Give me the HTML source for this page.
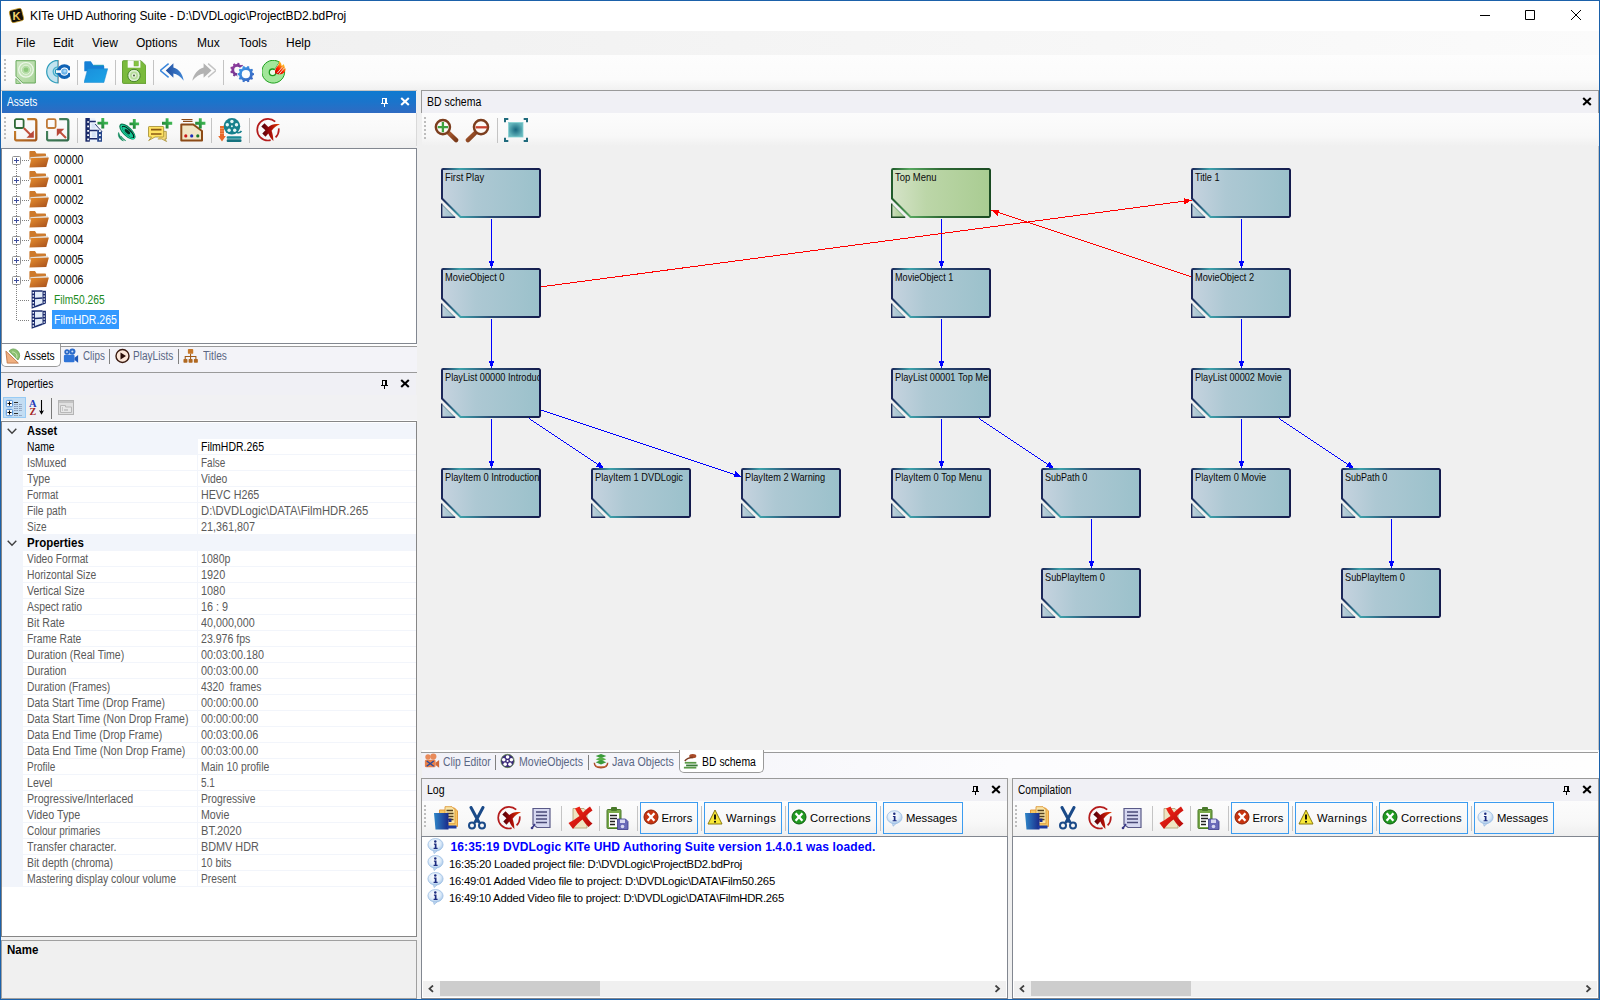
<!DOCTYPE html>
<html><head><meta charset="utf-8"><title>KITe UHD Authoring Suite</title>
<style>
*{box-sizing:border-box;margin:0;padding:0}
html,body{width:1600px;height:1000px;overflow:hidden;background:#f0f0f0}
body{font-family:"Liberation Sans",sans-serif;font-size:11px;color:#000;position:relative}
div,span,svg{position:absolute}
#titlebar{left:1px;top:1px;width:1598px;height:30px;background:#fff}
#titletext{left:29px;top:8px;font-size:12px;line-height:14px;white-space:nowrap;letter-spacing:-0.07px}
#menubar{left:1px;top:31px;width:1598px;height:24px;background:linear-gradient(90deg,#f0f0f0,#f0f0f0 15%,#fbfbfb)}
#menubar span{top:5px;font-size:12px;line-height:14px}
#maintb{left:1px;top:55px;width:1598px;height:35px;background:linear-gradient(#fdfdfd,#fbfbfb 70%,#f1f1f1)}
.grip{width:2px;background:repeating-linear-gradient(#bdbdbd 0 2px,transparent 2px 4px)}
.sep{width:1px;background:#c4c4c4}
.pt{height:22px;background:#f0f0f5;font-size:11px;line-height:22px;padding-left:5px;white-space:nowrap;letter-spacing:-0.15px}
.pt.act{background:linear-gradient(#0f7ad0,#1b74cb 50%,#2f6bc2);color:#fff}
.tb{background:linear-gradient(#fcfcfc,#f8f8f8 60%,#efefef)}
.wh{background:#fff;border:1px solid #828790}
.fr{border:1px solid #a0a0a0}
.t{white-space:nowrap;line-height:13px;font-size:12.3px;transform-origin:0 0}
.g{color:#5a5a5a}
</style></head><body>
<div style="left:0;top:0;width:1600px;height:1px;background:#1b61aa"></div>
<div style="left:0;top:0;width:1px;height:1000px;background:#1b61aa"></div>
<div style="left:1599px;top:0;width:1px;height:1000px;background:#1b61aa"></div>
<div style="left:0;top:999px;width:1600px;height:1px;background:#1b61aa"></div>
<div id="titlebar"><div id="titletext">KITe UHD Authoring Suite - D:\DVDLogic\ProjectBD2.bdProj</div></div>
<div id="menubar"><span style="left:15px">File</span><span style="left:52px">Edit</span><span style="left:91px">View</span><span style="left:135px">Options</span><span style="left:196px">Mux</span><span style="left:238px">Tools</span><span style="left:285px">Help</span></div>
<div id="maintb"></div>
<div class="grip" style="left:4px;top:59px;height:22px"></div>
<div class="sep" style="left:77px;top:60px;height:25px"></div>
<div class="sep" style="left:115px;top:60px;height:25px"></div>
<div class="sep" style="left:153px;top:60px;height:25px"></div>
<div class="sep" style="left:223px;top:60px;height:25px"></div>
<svg style="left:14px;top:60px" width="24" height="24" viewBox="0 0 24 24"><defs><linearGradient id="m0" x1="0" y1="0" x2="1" y2="1"><stop offset="0" stop-color="#cfe8c4"/><stop offset="1" stop-color="#a8d498"/></linearGradient></defs><path d="M2 0.700h19.300v22.300h-12.500l-6.800 -6.800z" fill="url(#m0)" stroke="#66a85a" stroke-width="1"/><circle cx="12" cy="9.800" r="7.300" fill="#c4e4b8" stroke="#eef8ea" stroke-width="1.200"/><circle cx="12" cy="9.800" r="4.600" fill="#b4dca6" stroke="#e4f4dc" stroke-width="1"/><circle cx="12" cy="9.800" r="2.300" fill="#8cc87a"/><path d="M1.900 18.500l5 5h-5z" fill="#b4dca6" stroke="#66a85a" stroke-width="0.800"/></svg>
<svg style="left:46px;top:60px" width="24" height="24" viewBox="0 0 24 24"><path d="M12 0.300a11.300 11.300 0 0 0 0 22.600z" fill="#c2e3ef" stroke="#2d9cba" stroke-width="1.200"/><path d="M12 6.800a4.800 4.800 0 0 0 0 9.600" fill="none" stroke="#49afc9" stroke-width="1.300"/><path d="M12 9a2.600 2.600 0 0 0 0 5.200" fill="none" stroke="#1f93b5" stroke-width="1.200"/><path d="M12.500 0.300v22.600" stroke="#9a9a9a" stroke-width="0.800"/><circle cx="18.400" cy="11.600" r="5.700" fill="none" stroke="#0f62b4" stroke-width="3.400"/><path d="M10 11.600h17" stroke="#fbfbfb" stroke-width="2.600"/><circle cx="18.400" cy="11.600" r="3.900" fill="#fff"/><circle cx="18.400" cy="11.600" r="3.200" fill="#6eb4ea"/><circle cx="18.800" cy="11.200" r="1.400" fill="#a8d6f6"/></svg>
<svg style="left:84px;top:60px" width="24" height="24" viewBox="0 0 24 24"><defs><linearGradient id="m2" x1="0" y1="0" x2="1" y2="1"><stop offset="0" stop-color="#1a8fdc"/><stop offset="1" stop-color="#1ca4e6"/></linearGradient></defs><path d="M0.300 2.200a1 1 0 0 1 1 -1h5.500l2.700 4.100h9.700a1 1 0 0 1 1 1v5h-19.900z" fill="#1580d6"/><path d="M9.500 5.300h10.200" stroke="#1a9ab8" stroke-width="1"/><path d="M3.700 8.700h20l-3.800 13.800h-19.900z" fill="url(#m2)" stroke="#1888d0" stroke-width="0.500"/></svg>
<svg style="left:122px;top:60px" width="24" height="24" viewBox="0 0 24 24"><path d="M1.300 0.700h17.700l5 5v17.700h-22.700a0.800 0.800 0 0 1 -0.800 -0.800v-21.100a0.800 0.800 0 0 1 0.800 -0.800z" fill="#7aba3c" stroke="#5c9a2a" stroke-width="0.900"/><rect x="5.700" y="0.300" width="12.700" height="7.400" fill="#fbfbfb"/><rect x="12" y="1.200" width="4.300" height="4.800" fill="#86c440" stroke="#6aa832" stroke-width="0.500"/><circle cx="12" cy="15.500" r="6.200" fill="#dcefd0" stroke="#3c7a20" stroke-width="0.900"/><circle cx="12" cy="15.500" r="4" fill="#b6dc9c"/><circle cx="12" cy="15.500" r="2.200" fill="#e8f4e0"/><circle cx="12" cy="15.500" r="0.900" fill="#3a4a30"/></svg>
<svg style="left:160px;top:60px" width="24" height="24" viewBox="0 0 24 24"><defs><linearGradient id="m4" x1="0" y1="0" x2="1" y2="0"><stop offset="0" stop-color="#234f9e"/><stop offset="1" stop-color="#3f86d6"/></linearGradient></defs><path d="M8.600 3.600l-8.300 6.900l8.300 6.800" fill="none" stroke="#3a86dc" stroke-width="1.500"/><path d="M13.400 3.200l-7.600 7.300l7.600 7.200v-4.200c3.600 0.600 7.400 3.200 10.300 7.300c-0.800 -6.400 -4.600 -12 -10.300 -13.400z" fill="url(#m4)"/></svg>
<svg style="left:192px;top:60px" width="24" height="24" viewBox="0 0 24 24"><path d="M16.100 3.600l7.900 6.900l-7.900 6.800" fill="none" stroke="#c4c4c4" stroke-width="1.500"/><path d="M11.600 3.200l7.900 7.300l-7.900 7.200v-4.200c-3.600 0.600 -7.900 3.200 -11.300 7.300c1.200 -6.400 5.600 -12 11.300 -13.400z" fill="#b2b2b2"/></svg>
<svg style="left:230px;top:60px" width="24" height="24" viewBox="0 0 24 24"><defs><linearGradient id="m6a" x1="0" y1="0" x2="1" y2="1"><stop offset="0" stop-color="#9a3aa0"/><stop offset="1" stop-color="#5c3a8c"/></linearGradient><linearGradient id="m6b" x1="0" y1="0" x2="1" y2="1"><stop offset="0" stop-color="#3aa0f0"/><stop offset="1" stop-color="#3a5cb8"/></linearGradient></defs><path d="M13.07 8.67L14.45 9.05L14.45 10.75L13.07 11.13L12.51 12.67L13.32 13.84L12.23 15.15L10.93 14.55L9.51 15.37L9.38 16.79L7.70 17.09L7.09 15.80L5.48 15.51L4.46 16.52L2.99 15.67L3.35 14.28L2.30 13.03L0.87 13.15L0.29 11.54L1.46 10.72L1.46 9.08L0.29 8.26L0.87 6.65L2.30 6.77L3.35 5.52L2.99 4.13L4.46 3.28L5.48 4.29L7.09 4.00L7.70 2.71L9.38 3.01L9.51 4.43L10.93 5.25L12.23 4.65L13.32 5.96L12.51 7.13Z" fill="url(#m6a)"/><circle cx="7.300" cy="9.900" r="3.100" fill="#fbfbfb"/><circle cx="15.900" cy="14.200" r="8.900" fill="#fbfbfb"/><path d="M22.68 12.91L24.15 13.32L24.15 15.08L22.68 15.49L22.14 17.14L23.10 18.33L22.06 19.77L20.62 19.23L19.22 20.25L19.29 21.78L17.61 22.32L16.76 21.05L15.04 21.05L14.19 22.32L12.51 21.78L12.58 20.25L11.18 19.23L9.74 19.77L8.70 18.33L9.66 17.14L9.12 15.49L7.65 15.08L7.65 13.32L9.12 12.91L9.66 11.26L8.70 10.07L9.74 8.63L11.18 9.17L12.58 8.15L12.51 6.62L14.19 6.08L15.04 7.35L16.76 7.35L17.61 6.08L19.29 6.62L19.22 8.15L20.62 9.17L22.06 8.63L23.10 10.07L22.14 11.26Z" fill="url(#m6b)"/><circle cx="15.900" cy="14.200" r="4.100" fill="#fdfdfd"/></svg>
<svg style="left:262px;top:60px" width="24" height="24" viewBox="0 0 24 24"><defs><linearGradient id="m7" x1="0" y1="1" x2="0.600" y2="0"><stop offset="0" stop-color="#c00000"/><stop offset="0.450" stop-color="#ff2000"/><stop offset="0.750" stop-color="#ff9a10"/><stop offset="1" stop-color="#ffe040"/></linearGradient></defs><path d="M11.400 12.100l6 -10a11.400 11.400 0 1 0 5.200 8.500z" fill="#a2e69a" stroke="#1ea01e" stroke-width="1"/><circle cx="10.600" cy="12.300" r="3.300" fill="#eafbe6" stroke="#1e9a1e" stroke-width="1.300"/><path d="M11.400 12.100l6.200 -10.200l5 8.700z" fill="#fbfbfb"/><path d="M13.300 13.200c-1 -3 1 -6 3 -8c0.500 -1.500 0.800 -3 0.700 -4.500c1.800 1.500 2.800 3.500 2.600 5.200c1 -0.300 1.600 -1 2 -1.800c0.900 1.600 1.400 3.300 1 4.600c0.500 0 0.800 -0.300 1 -0.600c0.400 2.400 -0.900 4.600 -3.200 5.600c-2.600 1.100 -5.600 0.500 -7.100 -0.500z" fill="url(#m7)"/><path d="M15.200 13.200l5.600 -6.600M17.300 13.900l5 -5.900" stroke="#e4e4e4" stroke-width="0.900"/></svg>
<svg style="left:1478px;top:8px" width="110" height="16" viewBox="0 0 110 16"><path d="M2 7.5h10M47.5 2.500h9v9h-9zM93 2l10 10M103 2l-10 10" stroke="#000" stroke-width="1" fill="none"/></svg>
<svg style="left:7px;top:7px" width="18" height="18" viewBox="0 0 18 18"><defs><linearGradient id="kg" x1="0" y1="0" x2="1" y2="1"><stop offset="0" stop-color="#fff0a0"/><stop offset="1" stop-color="#e8a818"/></linearGradient></defs><g transform="rotate(-14 9.500 8.500)"><rect x="3.200" y="2.200" width="12.600" height="12.600" rx="2.200" fill="#14100a" stroke="#c89a20" stroke-width="0.700"/></g><text x="5.600" y="13" font-family="Liberation Sans, sans-serif" font-weight="bold" font-size="11" fill="url(#kg)">K</text></svg>
<div style="left:1px;top:90px;width:416px;height:1px;background:#c6c6c6"></div>
<div class="pt act" style="left:2px;top:91px;width:414px"></div>
<span class="t" style="left:7px;top:96px;transform:scaleX(0.8209);color:#fff">Assets</span>
<svg style="left:381px;top:98px" width="8" height="10" viewBox="0 0 8 10" shape-rendering="crispEdges" fill="#fff"><rect x="1" y="0" width="5" height="1"/><rect x="1" y="0" width="1" height="5"/><rect x="4" y="0" width="2" height="5"/><rect x="0" y="5" width="7" height="1"/><rect x="3" y="6" width="1" height="3"/></svg>
<svg style="left:400px;top:97px" width="10" height="9" viewBox="0 0 10 9"><path d="M1.2 1l7.6 7M8.8 1l-7.6 7" stroke="#fff" stroke-width="2.1" fill="none"/></svg>
<div class="tb" style="left:1px;top:113px;width:416px;height:35px"></div>
<div class="grip" style="left:4px;top:117px;height:22px"></div>
<div style="left:416px;top:113px;width:1px;height:33px;background:#d9d9d9"></div>
<div class="sep" style="left:77px;top:118px;height:25px"></div>
<div class="sep" style="left:211px;top:118px;height:25px"></div>
<div class="sep" style="left:249px;top:118px;height:25px"></div>
<svg style="left:14px;top:118px" width="26" height="26" viewBox="0 0 26 26"><defs><linearGradient id="a0" x1="0" y1="0" x2="1" y2="1"><stop offset="0" stop-color="#d08a30"/><stop offset="1" stop-color="#a4561c"/></linearGradient></defs><path d="M13.200 1.200h7.100a2 2 0 0 1 2 2v17.200a2 2 0 0 1 -2 2h-17.300a2 2 0 0 1 -2 -2v-7.400" fill="none" stroke="url(#a0)" stroke-width="2.300"/><rect x="0.900" y="1.100" width="8.700" height="8.900" rx="1.500" fill="none" stroke="#2f6a36" stroke-width="1.800"/><path d="M9.800 10l7 7" stroke="#c0503c" stroke-width="2"/><path d="M19.800 12.500v7.300h-7.300z" fill="#b84838"/></svg>
<svg style="left:46px;top:118px" width="26" height="26" viewBox="0 0 26 26"><defs><linearGradient id="a1" x1="0" y1="0" x2="1" y2="1"><stop offset="0" stop-color="#4a8a62"/><stop offset="1" stop-color="#336a4a"/></linearGradient></defs><path d="M13.200 1.200h7.100a2 2 0 0 1 2 2v17.200a2 2 0 0 1 -2 2h-17.300a2 2 0 0 1 -2 -2v-7.400" fill="none" stroke="url(#a1)" stroke-width="2.300"/><rect x="0.900" y="1.100" width="8.700" height="8.900" rx="1.500" fill="none" stroke="#c07a38" stroke-width="1.800"/><path d="M13.500 13.500l6.500 6.500" stroke="#c0503c" stroke-width="2"/><path d="M10.800 18.300v-7.500h7.500z" fill="#b84838"/></svg>
<svg style="left:84px;top:118px" width="26" height="26" viewBox="0 0 26 26"><path d="M5 0.300h6.300v5.700l6.700 7.600v10h-13z" fill="#edf3fc"/><rect x="7.500" y="5.500" width="4" height="5" fill="#d5e3f6"/><rect x="7.800" y="14.300" width="4" height="5" fill="#d5e3f6"/><rect x="1.400" y="0" width="4.400" height="23.700" fill="#1a2968"/><path d="M13.200 11.800h1.300l3.500 1.800v10.100h-4.800z" fill="#27468a"/><path d="M11.200 6l2.500 3l4.300 4.600" stroke="#1a2968" stroke-width="0.900" fill="none"/><path d="M5.800 3.400h6M5.800 12.400h7.400M5.800 20.800h7.400" stroke="#1a2968" stroke-width="1.500"/><path d="M3.200 4h1.800M3.200 8.400h1.800M3.200 12.800h1.800M3.200 17.200h1.800M3.200 21.400h1.800M15 13.200h1.800M15 17.200h1.800M15 21.400h1.800" stroke="#fbfdff" stroke-width="1.700"/><defs><linearGradient id="pg" x1="0" y1="1" x2="1" y2="0"><stop offset="0" stop-color="#176a2c"/><stop offset="0.500" stop-color="#2fa246"/><stop offset="1" stop-color="#52cc62"/></linearGradient></defs><path d="M17.35 -0.20h2.9v3.85h3.85v2.9h-3.85v3.85h-2.9v-3.85h-3.85v-2.9h3.85z" fill="url(#pg)"/></svg>
<svg style="left:116px;top:118px" width="26" height="26" viewBox="0 0 26 26"><path d="M2.600 14.500c-1 3.500 0.800 6.700 4.800 8.500c-2.300 -2.500 -3.600 -5.300 -4.800 -8.500z" fill="#0f8a5c" stroke="#0f8a5c" stroke-width="0.600"/><path d="M5 18c0.500 2.200 2.200 3.900 4.800 4.700c-2 -1.400 -3.400 -3 -4.800 -4.700z" fill="#0f8a5c" stroke="#0f8a5c" stroke-width="0.500"/><ellipse cx="11.400" cy="13.600" rx="4.700" ry="10.400" transform="rotate(-46 11.400 13.600)" fill="#0c7a54"/><ellipse cx="11.800" cy="14" rx="3.700" ry="9.600" transform="rotate(-46 11.800 14)" fill="#1adca6"/><ellipse cx="12.100" cy="13.900" rx="2.900" ry="8.400" transform="rotate(-46 12.100 13.900)" fill="#0a1a14"/><ellipse cx="11.700" cy="14.100" rx="2.300" ry="7.400" transform="rotate(-46 11.700 14.100)" fill="#16c896"/><ellipse cx="11.400" cy="13.700" rx="1.600" ry="3.400" transform="rotate(-46 11.400 13.700)" fill="#083024"/><defs><linearGradient id="pg" x1="0" y1="1" x2="1" y2="0"><stop offset="0" stop-color="#176a2c"/><stop offset="0.500" stop-color="#2fa246"/><stop offset="1" stop-color="#52cc62"/></linearGradient></defs><path d="M16.85 1.10h2.9v3.35h3.35v2.9h-3.35v3.35h-2.9v-3.35h-3.35v-2.9h3.35z" fill="url(#pg)"/></svg>
<svg style="left:148px;top:118px" width="26" height="26" viewBox="0 0 26 26"><path d="M15 13.400h3.300v7.600h-1.500l1.800 2.500l-4.800 -2.500h-4" fill="#f2d878" stroke="#a89038" stroke-width="0.800"/><path d="M1.200 8.500h13.800a0.700 0.700 0 0 1 0.700 0.700v9.100a0.700 0.700 0 0 1 -0.700 0.700h-8l-6.300 3.500l2.800 -3.500h-2.300a0.700 0.700 0 0 1 -0.700 -0.700v-9.100a0.700 0.700 0 0 1 0.700 -0.700z" fill="#ffe262" stroke="#a08a30" stroke-width="0.800"/><path d="M3 11.600h10.500M3 16h10.500" stroke="#8a5a14" stroke-width="1.700"/><defs><linearGradient id="pg" x1="0" y1="1" x2="1" y2="0"><stop offset="0" stop-color="#176a2c"/><stop offset="0.500" stop-color="#2fa246"/><stop offset="1" stop-color="#52cc62"/></linearGradient></defs><path d="M17.65 0.20h2.9v3.65h3.65v2.9h-3.65v3.65h-2.9v-3.65h-3.65v-2.9h3.65z" fill="url(#pg)"/></svg>
<svg style="left:180px;top:118px" width="26" height="26" viewBox="0 0 26 26"><path d="M1.500 1.500h11M3 3.300h9.500" stroke="#8a4a18" stroke-width="1.200"/><path d="M1.300 6.500h12l8.700 6.500v9.400h-20.700z" fill="#f1e6c6" stroke="#8c4a16" stroke-width="2" stroke-linejoin="round"/><circle cx="5.800" cy="17.900" r="1.600" fill="#cc1818"/><circle cx="11.700" cy="17.900" r="1.600" fill="#1c2cb8"/><circle cx="17.800" cy="17.900" r="1.600" fill="#1c7a2c"/><defs><linearGradient id="pg" x1="0" y1="1" x2="1" y2="0"><stop offset="0" stop-color="#176a2c"/><stop offset="0.500" stop-color="#2fa246"/><stop offset="1" stop-color="#52cc62"/></linearGradient></defs><path d="M18.85 0.20h2.9v3.65h3.65v2.9h-3.65v3.65h-2.9v-3.65h-3.65v-2.9h3.65z" fill="url(#pg)"/></svg>
<svg style="left:218px;top:118px" width="26" height="26" viewBox="0 0 26 26"><circle cx="13.900" cy="8.300" r="8.300" fill="#17808c"/><path d="M19 14.500c2 0.500 3.500 0 4.500 -1.500" fill="none" stroke="#17808c" stroke-width="1.600"/><circle cx="13.900" cy="3.500" r="1.700" fill="#e4f4f4"/><circle cx="9.300" cy="6.800" r="1.700" fill="#e4f4f4"/><circle cx="18.500" cy="6.800" r="1.700" fill="#e4f4f4"/><circle cx="11.100" cy="12.200" r="1.700" fill="#e4f4f4"/><circle cx="16.700" cy="12.200" r="1.700" fill="#e4f4f4"/><circle cx="13.900" cy="8.300" r="1" fill="#e4f4f4"/><rect x="8.700" y="18.200" width="14.800" height="2.500" rx="1" fill="#1a8a96"/><rect x="8.700" y="21.300" width="14.800" height="2.600" rx="1" fill="#15727e"/><path d="M2 8.100h4v10h1.800l-3.800 5.300l-3.800 -5.300h1.800z" fill="#e8682a"/><path d="M2 10.500h4M2 13h4M2 15.500h4" stroke="#f4a070" stroke-width="0.800"/></svg>
<svg style="left:256px;top:118px" width="26" height="26" viewBox="0 0 26 26"><defs><linearGradient id="a7" x1="0" y1="0" x2="1" y2="0"><stop offset="0" stop-color="#4a0008"/><stop offset="0.450" stop-color="#a00808"/><stop offset="1" stop-color="#e84000"/></linearGradient></defs><circle cx="12" cy="11.700" r="10.800" fill="none" stroke="#b41c1c" stroke-width="1.700" stroke-dasharray="8.500 5.650 44.300 7.500 1.900 0"/><path d="M8.500 5.300L5.300 8.500L9.400 12.200L6.300 15.500L9.500 18.700L12.300 15.500C13.500 18.200 15 20.700 17.400 23C17.300 19.200 16.600 15.700 15.600 12.700C17.600 9.700 20.200 7.700 24 6.400C19.500 5.200 15.500 6.200 12.300 8.900Z" fill="url(#a7)"/></svg>
<div class="wh" style="left:1px;top:148px;width:416px;height:196px"></div>
<div style="left:16px;top:165px;width:1px;height:156px;background:repeating-linear-gradient(#808080 0 1px,transparent 1px 2px)"></div>
<div style="left:22px;top:160px;width:7px;height:1px;background:repeating-linear-gradient(90deg,#808080 0 1px,transparent 1px 2px)"></div>
<div style="left:22px;top:180px;width:7px;height:1px;background:repeating-linear-gradient(90deg,#808080 0 1px,transparent 1px 2px)"></div>
<div style="left:22px;top:200px;width:7px;height:1px;background:repeating-linear-gradient(90deg,#808080 0 1px,transparent 1px 2px)"></div>
<div style="left:22px;top:220px;width:7px;height:1px;background:repeating-linear-gradient(90deg,#808080 0 1px,transparent 1px 2px)"></div>
<div style="left:22px;top:240px;width:7px;height:1px;background:repeating-linear-gradient(90deg,#808080 0 1px,transparent 1px 2px)"></div>
<div style="left:22px;top:260px;width:7px;height:1px;background:repeating-linear-gradient(90deg,#808080 0 1px,transparent 1px 2px)"></div>
<div style="left:22px;top:280px;width:7px;height:1px;background:repeating-linear-gradient(90deg,#808080 0 1px,transparent 1px 2px)"></div>
<div style="left:18px;top:300px;width:11px;height:1px;background:repeating-linear-gradient(90deg,#808080 0 1px,transparent 1px 2px)"></div>
<div style="left:18px;top:320px;width:11px;height:1px;background:repeating-linear-gradient(90deg,#808080 0 1px,transparent 1px 2px)"></div>
<svg style="left:12px;top:156px" width="9" height="9" viewBox="0 0 9 9"><rect x="0.5" y="0.5" width="8" height="8" rx="1" fill="#fff" stroke="#919191"/><path d="M2 4.5h5M4.500 2v5" stroke="#3a4a9a" stroke-width="1"/></svg>
<svg style="left:28px;top:150px" width="22" height="20" viewBox="0 0 22 20"><defs><linearGradient id="fg" x1="0" y1="0" x2="1" y2="1"><stop offset="0" stop-color="#e8902e"/><stop offset="1" stop-color="#a54e1c"/></linearGradient></defs><path d="M1.400 1.700a0.800 0.800 0 0 1 0.800 -0.800h4.800l1.500 2.700h8.700a0.800 0.800 0 0 1 0.800 0.800v5h-16.600z" fill="#cd7a2c"/><path d="M2.300 7.300l17.200 -1.300v2.500h-17.200z" fill="#f2f2f0" stroke="#b8b8b8" stroke-width="0.300"/><path d="M3.300 7.900l17.600 -0.500l-2.600 9.700l-16.900 0.400z" fill="url(#fg)"/></svg>
<span class="t" style="left:54px;top:154px;transform:scaleX(0.8595)">00000</span>
<svg style="left:12px;top:176px" width="9" height="9" viewBox="0 0 9 9"><rect x="0.5" y="0.5" width="8" height="8" rx="1" fill="#fff" stroke="#919191"/><path d="M2 4.5h5M4.500 2v5" stroke="#3a4a9a" stroke-width="1"/></svg>
<svg style="left:28px;top:170px" width="22" height="20" viewBox="0 0 22 20"><defs><linearGradient id="fg" x1="0" y1="0" x2="1" y2="1"><stop offset="0" stop-color="#e8902e"/><stop offset="1" stop-color="#a54e1c"/></linearGradient></defs><path d="M1.400 1.700a0.800 0.800 0 0 1 0.800 -0.800h4.800l1.500 2.700h8.700a0.800 0.800 0 0 1 0.800 0.800v5h-16.600z" fill="#cd7a2c"/><path d="M2.300 7.300l17.200 -1.300v2.500h-17.200z" fill="#f2f2f0" stroke="#b8b8b8" stroke-width="0.300"/><path d="M3.300 7.900l17.600 -0.500l-2.600 9.700l-16.900 0.400z" fill="url(#fg)"/></svg>
<span class="t" style="left:54px;top:174px;transform:scaleX(0.8595)">00001</span>
<svg style="left:12px;top:196px" width="9" height="9" viewBox="0 0 9 9"><rect x="0.5" y="0.5" width="8" height="8" rx="1" fill="#fff" stroke="#919191"/><path d="M2 4.5h5M4.500 2v5" stroke="#3a4a9a" stroke-width="1"/></svg>
<svg style="left:28px;top:190px" width="22" height="20" viewBox="0 0 22 20"><defs><linearGradient id="fg" x1="0" y1="0" x2="1" y2="1"><stop offset="0" stop-color="#e8902e"/><stop offset="1" stop-color="#a54e1c"/></linearGradient></defs><path d="M1.400 1.700a0.800 0.800 0 0 1 0.800 -0.800h4.800l1.500 2.700h8.700a0.800 0.800 0 0 1 0.800 0.800v5h-16.600z" fill="#cd7a2c"/><path d="M2.300 7.300l17.200 -1.300v2.500h-17.200z" fill="#f2f2f0" stroke="#b8b8b8" stroke-width="0.300"/><path d="M3.300 7.900l17.600 -0.500l-2.600 9.700l-16.900 0.400z" fill="url(#fg)"/></svg>
<span class="t" style="left:54px;top:194px;transform:scaleX(0.8595)">00002</span>
<svg style="left:12px;top:216px" width="9" height="9" viewBox="0 0 9 9"><rect x="0.5" y="0.5" width="8" height="8" rx="1" fill="#fff" stroke="#919191"/><path d="M2 4.5h5M4.500 2v5" stroke="#3a4a9a" stroke-width="1"/></svg>
<svg style="left:28px;top:210px" width="22" height="20" viewBox="0 0 22 20"><defs><linearGradient id="fg" x1="0" y1="0" x2="1" y2="1"><stop offset="0" stop-color="#e8902e"/><stop offset="1" stop-color="#a54e1c"/></linearGradient></defs><path d="M1.400 1.700a0.800 0.800 0 0 1 0.800 -0.800h4.800l1.500 2.700h8.700a0.800 0.800 0 0 1 0.800 0.800v5h-16.600z" fill="#cd7a2c"/><path d="M2.300 7.300l17.200 -1.300v2.500h-17.200z" fill="#f2f2f0" stroke="#b8b8b8" stroke-width="0.300"/><path d="M3.300 7.900l17.600 -0.500l-2.600 9.700l-16.900 0.400z" fill="url(#fg)"/></svg>
<span class="t" style="left:54px;top:214px;transform:scaleX(0.8595)">00003</span>
<svg style="left:12px;top:236px" width="9" height="9" viewBox="0 0 9 9"><rect x="0.5" y="0.5" width="8" height="8" rx="1" fill="#fff" stroke="#919191"/><path d="M2 4.5h5M4.500 2v5" stroke="#3a4a9a" stroke-width="1"/></svg>
<svg style="left:28px;top:230px" width="22" height="20" viewBox="0 0 22 20"><defs><linearGradient id="fg" x1="0" y1="0" x2="1" y2="1"><stop offset="0" stop-color="#e8902e"/><stop offset="1" stop-color="#a54e1c"/></linearGradient></defs><path d="M1.400 1.700a0.800 0.800 0 0 1 0.800 -0.800h4.800l1.500 2.700h8.700a0.800 0.800 0 0 1 0.800 0.800v5h-16.600z" fill="#cd7a2c"/><path d="M2.300 7.300l17.200 -1.300v2.500h-17.200z" fill="#f2f2f0" stroke="#b8b8b8" stroke-width="0.300"/><path d="M3.300 7.900l17.600 -0.500l-2.600 9.700l-16.900 0.400z" fill="url(#fg)"/></svg>
<span class="t" style="left:54px;top:234px;transform:scaleX(0.8595)">00004</span>
<svg style="left:12px;top:256px" width="9" height="9" viewBox="0 0 9 9"><rect x="0.5" y="0.5" width="8" height="8" rx="1" fill="#fff" stroke="#919191"/><path d="M2 4.5h5M4.500 2v5" stroke="#3a4a9a" stroke-width="1"/></svg>
<svg style="left:28px;top:250px" width="22" height="20" viewBox="0 0 22 20"><defs><linearGradient id="fg" x1="0" y1="0" x2="1" y2="1"><stop offset="0" stop-color="#e8902e"/><stop offset="1" stop-color="#a54e1c"/></linearGradient></defs><path d="M1.400 1.700a0.800 0.800 0 0 1 0.800 -0.800h4.800l1.500 2.700h8.700a0.800 0.800 0 0 1 0.800 0.800v5h-16.600z" fill="#cd7a2c"/><path d="M2.300 7.300l17.200 -1.300v2.500h-17.200z" fill="#f2f2f0" stroke="#b8b8b8" stroke-width="0.300"/><path d="M3.300 7.900l17.600 -0.500l-2.600 9.700l-16.900 0.400z" fill="url(#fg)"/></svg>
<span class="t" style="left:54px;top:254px;transform:scaleX(0.8595)">00005</span>
<svg style="left:12px;top:276px" width="9" height="9" viewBox="0 0 9 9"><rect x="0.5" y="0.5" width="8" height="8" rx="1" fill="#fff" stroke="#919191"/><path d="M2 4.5h5M4.500 2v5" stroke="#3a4a9a" stroke-width="1"/></svg>
<svg style="left:28px;top:270px" width="22" height="20" viewBox="0 0 22 20"><defs><linearGradient id="fg" x1="0" y1="0" x2="1" y2="1"><stop offset="0" stop-color="#e8902e"/><stop offset="1" stop-color="#a54e1c"/></linearGradient></defs><path d="M1.400 1.700a0.800 0.800 0 0 1 0.800 -0.800h4.800l1.500 2.700h8.700a0.800 0.800 0 0 1 0.800 0.800v5h-16.600z" fill="#cd7a2c"/><path d="M2.300 7.300l17.200 -1.300v2.500h-17.200z" fill="#f2f2f0" stroke="#b8b8b8" stroke-width="0.300"/><path d="M3.300 7.900l17.600 -0.500l-2.600 9.700l-16.900 0.400z" fill="url(#fg)"/></svg>
<span class="t" style="left:54px;top:274px;transform:scaleX(0.8595)">00006</span>
<svg style="left:31px;top:290px" width="16" height="20" viewBox="0 0 16 20"><path d="M2 1h12v13.500l-12 4z" fill="#e4edf9"/><path d="M0.600 0.300h3.400v17.300l-3.400 1.100z" fill="#1c2c6e"/><path d="M11.500 0.800h3.400v12.800l-3.400 1.100z" fill="#1c2c6e"/><path d="M4 0.900h7.500M4 8.600l7.500 -0.500M4 16.800l7.500 -2.800" stroke="#1c2c6e" stroke-width="1.500"/><path d="M2.300 2v1.500M2.300 5.300v1.500M2.300 8.600v1.500M2.300 11.900v1.500M2.300 15.200v1.500M13.200 2.400v1.300M13.200 5.400v1.300M13.200 8.400v1.300M13.200 11.400v1.300" stroke="#f4f8fd" stroke-width="1.500"/></svg>
<svg style="left:31px;top:310px" width="16" height="20" viewBox="0 0 16 20"><path d="M2 1h12v13.500l-12 4z" fill="#e4edf9"/><path d="M0.600 0.300h3.400v17.300l-3.400 1.100z" fill="#1c2c6e"/><path d="M11.500 0.800h3.400v12.800l-3.400 1.100z" fill="#1c2c6e"/><path d="M4 0.900h7.500M4 8.600l7.500 -0.500M4 16.800l7.500 -2.800" stroke="#1c2c6e" stroke-width="1.500"/><path d="M2.300 2v1.500M2.300 5.300v1.500M2.300 8.600v1.500M2.300 11.900v1.500M2.300 15.200v1.500M13.200 2.400v1.300M13.200 5.400v1.300M13.200 8.400v1.300M13.200 11.400v1.300" stroke="#f4f8fd" stroke-width="1.500"/></svg>
<span class="t" style="left:54px;top:294px;transform:scaleX(0.8332);color:#1e8c1e">Film50.265</span>
<div style="left:52px;top:310px;width:67px;height:19px;background:#3399ff"></div>
<span class="t" style="left:54px;top:314px;transform:scaleX(0.8508);color:#fff">FilmHDR.265</span>
<div style="left:1px;top:344px;width:416px;height:28px;background:#f3f3f8"></div>
<div style="left:1px;top:344px;width:416px;height:2px;background:#fdfdfd"></div>
<div style="left:60px;top:346px;width:357px;height:1px;background:#9a9a9a"></div>
<div style="left:1px;top:344px;width:60px;height:23px;background:#fff;border:1px solid #9a9a9a;border-top:none;border-radius:0 0 5px 5px"></div>
<svg style="left:5px;top:348px" width="16" height="16" viewBox="0 0 18 18"><path d="M9 1a7.500 7.500 0 0 1 7.500 7.500a7.500 7.500 0 0 1 -2 5l-10 -10a7.500 7.500 0 0 1 4.500 -2.500z" fill="#8cc070" stroke="#5a9a48" stroke-width="0.800"/><path d="M8 4.500a5 5 0 0 1 5 7" fill="none" stroke="#d0ecc0" stroke-width="1"/><path d="M1 3.500l14 13.500h-12.500z" fill="#f0b080" stroke="#c07848" stroke-width="1"/></svg>
<span class="t" style="left:24px;top:350px;transform:scaleX(0.8290)">Assets</span>
<svg style="left:63px;top:348px" width="16" height="16" viewBox="0 0 18 18"><circle cx="4.500" cy="4.500" r="3" fill="#2c6ac8"/><circle cx="10.500" cy="4" r="3.500" fill="#2c6ac8"/><circle cx="4.500" cy="4.500" r="1" fill="#cfe0f8"/><circle cx="10.500" cy="4" r="1.200" fill="#cfe0f8"/><rect x="1" y="7.500" width="12" height="8.500" rx="1.500" fill="#2f74d8"/><path d="M13 11l4 -3v8.500l-4 -3z" fill="#1f58b8"/></svg>
<span class="t" style="left:82.5px;top:350px;transform:scaleX(0.7974);color:#5a6784">Clips</span>
<div class="sep" style="left:109px;top:349px;height:15px;background:#808080"></div>
<svg style="left:115px;top:348px" width="16" height="16" viewBox="0 0 16 16"><circle cx="7.500" cy="8" r="6.500" fill="#fbe6d8" stroke="#3a1a10" stroke-width="1.400"/><path d="M5.500 4.500l5.500 3.500l-5.500 3.500z" fill="#2a0e08"/></svg>
<span class="t" style="left:133px;top:350px;transform:scaleX(0.8188);color:#5a6784">PlayLists</span>
<div class="sep" style="left:178px;top:349px;height:15px;background:#808080"></div>
<svg style="left:183px;top:348px" width="16" height="16" viewBox="0 0 18 18"><rect x="5.500" y="1" width="6" height="5.500" rx="1" fill="#c87828"/><path d="M8.500 6.500v3M2.500 13v-3.500h12v3.500M8.500 9.500v3.500" stroke="#a05a18" stroke-width="1.200" fill="none"/><rect x="0.500" y="12.500" width="4.500" height="4" rx="0.800" fill="#b06820"/><rect x="6.300" y="12.500" width="4.500" height="4" rx="0.800" fill="#b06820"/><rect x="12.200" y="12.500" width="4.500" height="4" rx="0.800" fill="#b06820"/></svg>
<span class="t" style="left:202.5px;top:350px;transform:scaleX(0.8261);color:#5a6784">Titles</span>
<div style="left:1px;top:372px;width:416px;height:1px;background:#9a9a9a"></div>
<div class="pt" style="left:2px;top:373px;width:414px"></div>
<span class="t" style="left:7px;top:378px;transform:scaleX(0.8259)">Properties</span>
<svg style="left:381px;top:380px" width="8" height="10" viewBox="0 0 8 10" shape-rendering="crispEdges" fill="#000"><rect x="1" y="0" width="5" height="1"/><rect x="1" y="0" width="1" height="5"/><rect x="4" y="0" width="2" height="5"/><rect x="0" y="5" width="7" height="1"/><rect x="3" y="6" width="1" height="3"/></svg>
<svg style="left:400px;top:379px" width="10" height="9" viewBox="0 0 10 9"><path d="M1.2 1l7.6 7M8.8 1l-7.6 7" stroke="#000" stroke-width="2.1" fill="none"/></svg>
<div style="left:1px;top:395px;width:416px;height:26px;background:#f1f1f3"></div>
<div style="left:1px;top:420px;width:416px;height:1px;background:#fcfcfc"></div>
<div style="left:3px;top:397px;width:23px;height:21px;background:#c3ddf3;border:1px solid #98cbf5"></div>
<svg style="left:5px;top:399px" width="18" height="18" viewBox="0 0 18 18"><rect x="1.300" y="1.400" width="6.300" height="6.300" rx="1.200" fill="#fff" stroke="#4a8cd8" stroke-width="1"/><rect x="1.300" y="10.400" width="6.300" height="6.300" rx="1.200" fill="#fff" stroke="#4a8cd8" stroke-width="1"/><path d="M2.500 4.500h4M4.500 2.500v4M2.500 13.500h4M4.500 11.500v4" stroke="#000" stroke-width="1.050"/><path d="M9 3.500h4M9 14.500h4" stroke="#303030" stroke-width="1"/><path d="M9 5.5h4M14 5.5h3" stroke="#8a9ab8" stroke-width="1" stroke-dasharray="1.300 0.050"/><path d="M9 7.5h4M14 7.5h3" stroke="#8a9ab8" stroke-width="1" stroke-dasharray="1.300 0.050"/><path d="M9 9.5h4M14 9.5h3" stroke="#8a9ab8" stroke-width="1" stroke-dasharray="1.300 0.050"/><path d="M9 11.5h4M14 11.5h3" stroke="#8a9ab8" stroke-width="1" stroke-dasharray="1.300 0.050"/><path d="M9 16.5h4M14 16.5h3" stroke="#8a9ab8" stroke-width="1" stroke-dasharray="1.300 0.050"/></svg>
<svg style="left:29px;top:399px" width="18" height="18" viewBox="0 0 18 18"><text x="0" y="8" font-family="Liberation Serif, serif" font-weight="bold" font-size="10.500" fill="#2438b8">A</text><text x="0.500" y="16.200" font-family="Liberation Serif, serif" font-weight="bold" font-size="10" fill="#a42424">Z</text><path d="M12.500 1v13" stroke="#000" stroke-width="1.100"/><path d="M10 11.300l2.500 1l2.500 -1l-2.500 4.500z" fill="#000"/></svg>
<div class="sep" style="left:51px;top:398px;height:21px;background:#7a7a7a"></div>
<svg style="left:58px;top:400px" width="16" height="15" viewBox="0 0 16 15"><rect x="0.500" y="0.500" width="15" height="14" fill="#e0e0e0" stroke="#b4b4b4"/><rect x="1" y="1" width="14" height="2" fill="#c4c4c4"/><path d="M2.500 5.500h5v1.500h6v5.500h-11z" fill="#e8e8e8" stroke="#b8b8b8"/><path d="M4 8h1M4 10h1M6 10h4" stroke="#a8a8a8"/></svg>
<div class="wh" style="left:1px;top:421px;width:416px;height:516px;border-color:#868686"></div>
<div style="left:2px;top:422px;width:21px;height:465px;background:#f2f5fb"></div>
<div style="left:2px;top:423px;width:414px;height:16px;background:#f2f5fb"></div>
<svg style="left:7px;top:428px" width="10" height="7" viewBox="0 0 10 7"><path d="M0.7 0.7l4.3 4.500l4.300 -4.500" stroke="#404040" stroke-width="1.4" fill="none"/></svg>
<span class="t" style="left:27px;top:425px;transform:scaleX(0.8985);font-weight:bold">Asset</span>
<div style="left:23px;top:454px;width:393px;height:1px;background:#f2f5fb"></div>
<div style="left:23px;top:439px;width:174px;height:15px;background:#f2f5fb"></div>
<span class="t" style="left:27px;top:441px;transform:scaleX(0.8412)">Name</span>
<span class="t" style="left:201px;top:441px;transform:scaleX(0.8535)">FilmHDR.265</span>
<div style="left:23px;top:470px;width:393px;height:1px;background:#f2f5fb"></div>
<span class="t" style="left:27px;top:457px;transform:scaleX(0.8476);color:#5a5a5a">IsMuxed</span>
<span class="t" style="left:201px;top:457px;transform:scaleX(0.8112);color:#5a5a5a">False</span>
<div style="left:23px;top:486px;width:393px;height:1px;background:#f2f5fb"></div>
<span class="t" style="left:27px;top:473px;transform:scaleX(0.8662);color:#5a5a5a">Type</span>
<span class="t" style="left:201px;top:473px;transform:scaleX(0.8419);color:#5a5a5a">Video</span>
<div style="left:23px;top:502px;width:393px;height:1px;background:#f2f5fb"></div>
<span class="t" style="left:27px;top:489px;transform:scaleX(0.8035);color:#5a5a5a">Format</span>
<span class="t" style="left:201px;top:489px;transform:scaleX(0.8702);color:#5a5a5a">HEVC H265</span>
<div style="left:23px;top:518px;width:393px;height:1px;background:#f2f5fb"></div>
<span class="t" style="left:27px;top:505px;transform:scaleX(0.8351);color:#5a5a5a">File path</span>
<span class="t" style="left:201px;top:505px;transform:scaleX(0.9156);color:#5a5a5a">D:\DVDLogic\DATA\FilmHDR.265</span>
<div style="left:23px;top:534px;width:393px;height:1px;background:#f2f5fb"></div>
<span class="t" style="left:27px;top:521px;transform:scaleX(0.8149);color:#5a5a5a">Size</span>
<span class="t" style="left:201px;top:521px;transform:scaleX(0.8788);color:#5a5a5a">21,361,807</span>
<div style="left:2px;top:535px;width:414px;height:16px;background:#f2f5fb"></div>
<svg style="left:7px;top:540px" width="10" height="7" viewBox="0 0 10 7"><path d="M0.7 0.7l4.3 4.500l4.300 -4.500" stroke="#404040" stroke-width="1.4" fill="none"/></svg>
<span class="t" style="left:27px;top:537px;transform:scaleX(0.9336);font-weight:bold">Properties</span>
<div style="left:23px;top:566px;width:393px;height:1px;background:#f2f5fb"></div>
<span class="t" style="left:27px;top:553px;transform:scaleX(0.8314);color:#5a5a5a">Video Format</span>
<span class="t" style="left:201px;top:553px;transform:scaleX(0.8595);color:#5a5a5a">1080p</span>
<div style="left:23px;top:582px;width:393px;height:1px;background:#f2f5fb"></div>
<span class="t" style="left:27px;top:569px;transform:scaleX(0.8378);color:#5a5a5a">Horizontal Size</span>
<span class="t" style="left:201px;top:569px;transform:scaleX(0.8844);color:#5a5a5a">1920</span>
<div style="left:23px;top:598px;width:393px;height:1px;background:#f2f5fb"></div>
<span class="t" style="left:27px;top:585px;transform:scaleX(0.8496);color:#5a5a5a">Vertical Size</span>
<span class="t" style="left:201px;top:585px;transform:scaleX(0.8844);color:#5a5a5a">1080</span>
<div style="left:23px;top:614px;width:393px;height:1px;background:#f2f5fb"></div>
<span class="t" style="left:27px;top:601px;transform:scaleX(0.8499);color:#5a5a5a">Aspect ratio</span>
<span class="t" style="left:201px;top:601px;transform:scaleX(0.8806);color:#5a5a5a">16 : 9</span>
<div style="left:23px;top:630px;width:393px;height:1px;background:#f2f5fb"></div>
<span class="t" style="left:27px;top:617px;transform:scaleX(0.8594);color:#5a5a5a">Bit Rate</span>
<span class="t" style="left:201px;top:617px;transform:scaleX(0.8739);color:#5a5a5a">40,000,000</span>
<div style="left:23px;top:646px;width:393px;height:1px;background:#f2f5fb"></div>
<span class="t" style="left:27px;top:633px;transform:scaleX(0.8362);color:#5a5a5a">Frame Rate</span>
<span class="t" style="left:201px;top:633px;transform:scaleX(0.8599);color:#5a5a5a">23.976 fps</span>
<div style="left:23px;top:662px;width:393px;height:1px;background:#f2f5fb"></div>
<span class="t" style="left:27px;top:649px;transform:scaleX(0.8566);color:#5a5a5a">Duration (Real Time)</span>
<span class="t" style="left:201px;top:649px;transform:scaleX(0.8772);color:#5a5a5a">00:03:00.180</span>
<div style="left:23px;top:678px;width:393px;height:1px;background:#f2f5fb"></div>
<span class="t" style="left:27px;top:665px;transform:scaleX(0.8474);color:#5a5a5a">Duration</span>
<span class="t" style="left:201px;top:665px;transform:scaleX(0.8818);color:#5a5a5a">00:03:00.00</span>
<div style="left:23px;top:694px;width:393px;height:1px;background:#f2f5fb"></div>
<span class="t" style="left:27px;top:681px;transform:scaleX(0.8347);color:#5a5a5a">Duration (Frames)</span>
<span class="t" style="left:201px;top:681px;transform:scaleX(0.8413);color:#5a5a5a">4320&nbsp; frames</span>
<div style="left:23px;top:710px;width:393px;height:1px;background:#f2f5fb"></div>
<span class="t" style="left:27px;top:697px;transform:scaleX(0.8489);color:#5a5a5a">Data Start Time (Drop Frame)</span>
<span class="t" style="left:201px;top:697px;transform:scaleX(0.8818);color:#5a5a5a">00:00:00.00</span>
<div style="left:23px;top:726px;width:393px;height:1px;background:#f2f5fb"></div>
<span class="t" style="left:27px;top:713px;transform:scaleX(0.8561);color:#5a5a5a">Data Start Time (Non Drop Frame)</span>
<span class="t" style="left:201px;top:713px;transform:scaleX(0.8818);color:#5a5a5a">00:00:00:00</span>
<div style="left:23px;top:742px;width:393px;height:1px;background:#f2f5fb"></div>
<span class="t" style="left:27px;top:729px;transform:scaleX(0.8532);color:#5a5a5a">Data End Time (Drop Frame)</span>
<span class="t" style="left:201px;top:729px;transform:scaleX(0.8818);color:#5a5a5a">00:03:00.06</span>
<div style="left:23px;top:758px;width:393px;height:1px;background:#f2f5fb"></div>
<span class="t" style="left:27px;top:745px;transform:scaleX(0.8577);color:#5a5a5a">Data End Time (Non Drop Frame)</span>
<span class="t" style="left:201px;top:745px;transform:scaleX(0.8818);color:#5a5a5a">00:03:00.00</span>
<div style="left:23px;top:774px;width:393px;height:1px;background:#f2f5fb"></div>
<span class="t" style="left:27px;top:761px;transform:scaleX(0.8117);color:#5a5a5a">Profile</span>
<span class="t" style="left:201px;top:761px;transform:scaleX(0.8466);color:#5a5a5a">Main 10 profile</span>
<div style="left:23px;top:790px;width:393px;height:1px;background:#f2f5fb"></div>
<span class="t" style="left:27px;top:777px;transform:scaleX(0.8672);color:#5a5a5a">Level</span>
<span class="t" style="left:201px;top:777px;transform:scaleX(0.8129);color:#5a5a5a">5.1</span>
<div style="left:23px;top:806px;width:393px;height:1px;background:#f2f5fb"></div>
<span class="t" style="left:27px;top:793px;transform:scaleX(0.8686);color:#5a5a5a">Progressive/Interlaced</span>
<span class="t" style="left:201px;top:793px;transform:scaleX(0.8376);color:#5a5a5a">Progressive</span>
<div style="left:23px;top:822px;width:393px;height:1px;background:#f2f5fb"></div>
<span class="t" style="left:27px;top:809px;transform:scaleX(0.8723);color:#5a5a5a">Video Type</span>
<span class="t" style="left:201px;top:809px;transform:scaleX(0.8656);color:#5a5a5a">Movie</span>
<div style="left:23px;top:838px;width:393px;height:1px;background:#f2f5fb"></div>
<span class="t" style="left:27px;top:825px;transform:scaleX(0.8124);color:#5a5a5a">Colour primaries</span>
<span class="t" style="left:201px;top:825px;transform:scaleX(0.9017);color:#5a5a5a">BT.2020</span>
<div style="left:23px;top:854px;width:393px;height:1px;background:#f2f5fb"></div>
<span class="t" style="left:27px;top:841px;transform:scaleX(0.8709);color:#5a5a5a">Transfer character.</span>
<span class="t" style="left:201px;top:841px;transform:scaleX(0.8810);color:#5a5a5a">BDMV HDR</span>
<div style="left:23px;top:870px;width:393px;height:1px;background:#f2f5fb"></div>
<span class="t" style="left:27px;top:857px;transform:scaleX(0.8510);color:#5a5a5a">Bit depth (chroma)</span>
<span class="t" style="left:201px;top:857px;transform:scaleX(0.8416);color:#5a5a5a">10 bits</span>
<div style="left:23px;top:886px;width:393px;height:1px;background:#f2f5fb"></div>
<span class="t" style="left:27px;top:873px;transform:scaleX(0.8486);color:#5a5a5a">Mastering display colour volume</span>
<span class="t" style="left:201px;top:873px;transform:scaleX(0.8304);color:#5a5a5a">Present</span>
<div style="left:197px;top:439px;width:1px;height:448px;background:#f2f5fb"></div>
<div class="fr" style="left:1px;top:940px;width:416px;height:59px;background:#f0f0f0"></div>
<span class="t" style="left:7px;top:944px;transform:scaleX(0.9343);font-weight:bold">Name</span>
<div style="left:421px;top:90px;width:1178px;height:1px;background:#9a9a9a"></div>
<div style="left:421px;top:90px;width:1px;height:23px;background:#9a9a9a"></div>
<div class="pt" style="left:422px;top:91px;width:1177px"></div>
<span class="t" style="left:427px;top:96px;transform:scaleX(0.8541)">BD schema</span>
<svg style="left:1582px;top:97px" width="10" height="9" viewBox="0 0 10 9"><path d="M1.2 1l7.6 7M8.8 1l-7.6 7" stroke="#000" stroke-width="2.1" fill="none"/></svg>
<div style="left:1598px;top:90px;width:1px;height:23px;background:#9a9a9a"></div>
<div style="left:1598px;top:146px;width:1px;height:604px;background:#c4c4c4"></div>
<div class="tb" style="left:422px;top:113px;width:1176px;height:33px;background:linear-gradient(#fcfcfc,#f8f8f8 70%,#f0f0f0)"></div>
<div class="grip" style="left:424px;top:117px;height:22px"></div>
<div class="sep" style="left:497px;top:118px;height:25px"></div>
<svg style="left:433px;top:117px" width="26" height="26" viewBox="0 0 26 26"><defs><linearGradient id="zh" x1="0" y1="0" x2="1" y2="1"><stop offset="0" stop-color="#a85a30"/><stop offset="1" stop-color="#7a3a1a"/></linearGradient></defs><path d="M15.800 16l7.300 7.100" stroke="url(#zh)" stroke-width="4.400" stroke-linecap="round"/><circle cx="9.900" cy="10.100" r="7.100" fill="#fdfaf6" stroke="#7c3e1e" stroke-width="2.400"/><path d="M9.900 5v10.200M4.700 10.100h10.400" stroke="#3fa23f" stroke-width="2.300"/></svg>
<svg style="left:465px;top:117px" width="26" height="26" viewBox="0 0 26 26"><path d="M10.200 16l-7.300 7.100" stroke="url(#zh)" stroke-width="4.400" stroke-linecap="round"/><circle cx="16" cy="10.100" r="7.100" fill="#fdfaf6" stroke="#7c3e1e" stroke-width="2.400"/><path d="M10.600 10.300h11.800" stroke="#c8412e" stroke-width="2.300"/></svg>
<svg style="left:503px;top:117px" width="26" height="26" viewBox="0 0 26 26"><defs><radialGradient id="fr"><stop offset="0" stop-color="#17687f"/><stop offset="1" stop-color="#62b4bb"/></radialGradient></defs><rect x="5.500" y="5.500" width="14.500" height="14.500" fill="url(#fr)" stroke="#86d2d2" stroke-width="0.800"/><path d="M2 5.300v-3.300h3.300M20.700 2h3.300v3.300M24 20.700v3.300h-3.300M5.300 24h-3.300v-3.300" stroke="#1f6a7c" stroke-width="2" fill="none"/></svg>
<svg style="left:422px;top:146px" width="1176" height="606" viewBox="422 146 1176 606" font-family="Liberation Sans, sans-serif">
<defs>
<linearGradient id="nb" x1="0" x2="1" y1="0" y2="0"><stop offset="0" stop-color="#c6d3df"/><stop offset="0.35" stop-color="#adc8d3"/><stop offset="1" stop-color="#9bc1cb"/></linearGradient>
<linearGradient id="ng" x1="0" x2="1" y1="0" y2="0"><stop offset="0" stop-color="#d5e3c8"/><stop offset="0.35" stop-color="#bcd6a8"/><stop offset="1" stop-color="#a9cc92"/></linearGradient>
<linearGradient id="sb" x1="0" x2="1" y1="0" y2="0"><stop offset="0" stop-color="#1a2458"/><stop offset="0.18" stop-color="#3ea3ab"/><stop offset="0.5" stop-color="#2a4a72"/><stop offset="1" stop-color="#131a4c"/></linearGradient>
<linearGradient id="sg" x1="0" x2="1" y1="0" y2="0"><stop offset="0" stop-color="#1f5a2a"/><stop offset="0.18" stop-color="#58a860"/><stop offset="0.5" stop-color="#2f6a35"/><stop offset="1" stop-color="#1a4a22"/></linearGradient>
</defs>
<line x1="491.5" y1="218.5" x2="491.5" y2="268.5" stroke="#0000ff" stroke-width="1" shape-rendering="crispEdges"/>
<path d="M491.5 268.5L488.7 260.5L494.3 260.5z" fill="#0000ff" shape-rendering="crispEdges"/>
<line x1="941.5" y1="218.5" x2="941.5" y2="268.5" stroke="#0000ff" stroke-width="1" shape-rendering="crispEdges"/>
<path d="M941.5 268.5L938.7 260.5L944.3 260.5z" fill="#0000ff" shape-rendering="crispEdges"/>
<line x1="1241.5" y1="218.5" x2="1241.5" y2="268.5" stroke="#0000ff" stroke-width="1" shape-rendering="crispEdges"/>
<path d="M1241.5 268.5L1238.7 260.5L1244.3 260.5z" fill="#0000ff" shape-rendering="crispEdges"/>
<line x1="491.5" y1="318.5" x2="491.5" y2="368.5" stroke="#0000ff" stroke-width="1" shape-rendering="crispEdges"/>
<path d="M491.5 368.5L488.7 360.5L494.3 360.5z" fill="#0000ff" shape-rendering="crispEdges"/>
<line x1="941.5" y1="318.5" x2="941.5" y2="368.5" stroke="#0000ff" stroke-width="1" shape-rendering="crispEdges"/>
<path d="M941.5 368.5L938.7 360.5L944.3 360.5z" fill="#0000ff" shape-rendering="crispEdges"/>
<line x1="1241.5" y1="318.5" x2="1241.5" y2="368.5" stroke="#0000ff" stroke-width="1" shape-rendering="crispEdges"/>
<path d="M1241.5 368.5L1238.7 360.5L1244.3 360.5z" fill="#0000ff" shape-rendering="crispEdges"/>
<line x1="491.5" y1="418.5" x2="491.5" y2="468.5" stroke="#0000ff" stroke-width="1" shape-rendering="crispEdges"/>
<path d="M491.5 468.5L488.7 460.5L494.3 460.5z" fill="#0000ff" shape-rendering="crispEdges"/>
<line x1="529.0" y1="418.5" x2="604.0" y2="468.5" stroke="#0000ff" stroke-width="1" shape-rendering="crispEdges"/>
<path d="M604.0 468.5L596.0 467.0L599.5 461.7z" fill="#0000ff" shape-rendering="crispEdges"/>
<line x1="541.5" y1="410.2" x2="741.5" y2="476.8" stroke="#0000ff" stroke-width="1" shape-rendering="crispEdges"/>
<path d="M741.5 476.8L733.4 477.5L735.4 471.4z" fill="#0000ff" shape-rendering="crispEdges"/>
<line x1="941.5" y1="418.5" x2="941.5" y2="468.5" stroke="#0000ff" stroke-width="1" shape-rendering="crispEdges"/>
<path d="M941.5 468.5L938.7 460.5L944.3 460.5z" fill="#0000ff" shape-rendering="crispEdges"/>
<line x1="979.0" y1="418.5" x2="1054.0" y2="468.5" stroke="#0000ff" stroke-width="1" shape-rendering="crispEdges"/>
<path d="M1054.0 468.5L1046.0 467.0L1049.5 461.7z" fill="#0000ff" shape-rendering="crispEdges"/>
<line x1="1241.5" y1="418.5" x2="1241.5" y2="468.5" stroke="#0000ff" stroke-width="1" shape-rendering="crispEdges"/>
<path d="M1241.5 468.5L1238.7 460.5L1244.3 460.5z" fill="#0000ff" shape-rendering="crispEdges"/>
<line x1="1279.0" y1="418.5" x2="1354.0" y2="468.5" stroke="#0000ff" stroke-width="1" shape-rendering="crispEdges"/>
<path d="M1354.0 468.5L1346.0 467.0L1349.5 461.7z" fill="#0000ff" shape-rendering="crispEdges"/>
<line x1="1091.5" y1="518.5" x2="1091.5" y2="568.5" stroke="#0000ff" stroke-width="1" shape-rendering="crispEdges"/>
<path d="M1091.5 568.5L1088.7 560.5L1094.3 560.5z" fill="#0000ff" shape-rendering="crispEdges"/>
<line x1="1391.5" y1="518.5" x2="1391.5" y2="568.5" stroke="#0000ff" stroke-width="1" shape-rendering="crispEdges"/>
<path d="M1391.5 568.5L1388.7 560.5L1394.3 560.5z" fill="#0000ff" shape-rendering="crispEdges"/>
<line x1="541.5" y1="286.8" x2="1191.5" y2="200.2" stroke="#ff0000" stroke-width="1" shape-rendering="crispEdges"/>
<path d="M1191.5 200.2L1184.5 204.3L1183.6 198.0z" fill="#ff0000" shape-rendering="crispEdges"/>
<line x1="1191.5" y1="276.8" x2="991.5" y2="210.2" stroke="#ff0000" stroke-width="1" shape-rendering="crispEdges"/>
<path d="M991.5 210.2L999.6 209.5L997.6 215.6z" fill="#ff0000" shape-rendering="crispEdges"/>
<g transform="translate(441 168)"><path d="M2.200 1H97.800A1.200 1.200 0 0 1 99 2.200V47.800A1.200 1.200 0 0 1 97.800 49H19.500L1 30.500V2.200A1.200 1.200 0 0 1 2.200 1Z" fill="url(#nb)" stroke="url(#sb)" stroke-width="2"/><path d="M0.500 36v13.500h13.500z" fill="url(#nb)"/><path d="M0.700 36.200l13.300 13.300" stroke="#4a7a8c" stroke-width="0.800" fill="none"/><path d="M0.700 35.500v13.800h13.500" stroke="#1c2858" stroke-width="1.400" fill="none"/></g>
<clipPath id="c0"><rect x="443" y="170" width="96" height="46"/></clipPath>
<text x="445" y="181.4" font-size="10.6" textLength="39.1" lengthAdjust="spacingAndGlyphs" fill="#0a0a0a" clip-path="url(#c0)">First Play</text>
<g transform="translate(891 168)"><path d="M2.200 1H97.800A1.200 1.200 0 0 1 99 2.200V47.800A1.200 1.200 0 0 1 97.800 49H19.500L1 30.500V2.200A1.200 1.200 0 0 1 2.200 1Z" fill="url(#ng)" stroke="url(#sg)" stroke-width="2"/><path d="M0.500 36v13.500h13.500z" fill="url(#ng)"/><path d="M0.700 36.200l13.300 13.300" stroke="#5a9a62" stroke-width="0.800" fill="none"/><path d="M0.700 35.500v13.800h13.500" stroke="#1f4a25" stroke-width="1.400" fill="none"/></g>
<clipPath id="c1"><rect x="893" y="170" width="96" height="46"/></clipPath>
<text x="895" y="181.4" font-size="10.6" textLength="41.5" lengthAdjust="spacingAndGlyphs" fill="#0a0a0a" clip-path="url(#c1)">Top Menu</text>
<g transform="translate(1191 168)"><path d="M2.200 1H97.800A1.200 1.200 0 0 1 99 2.200V47.800A1.200 1.200 0 0 1 97.800 49H19.500L1 30.500V2.200A1.200 1.200 0 0 1 2.200 1Z" fill="url(#nb)" stroke="url(#sb)" stroke-width="2"/><path d="M0.500 36v13.500h13.500z" fill="url(#nb)"/><path d="M0.700 36.200l13.300 13.300" stroke="#4a7a8c" stroke-width="0.800" fill="none"/><path d="M0.700 35.500v13.800h13.500" stroke="#1c2858" stroke-width="1.400" fill="none"/></g>
<clipPath id="c2"><rect x="1193" y="170" width="96" height="46"/></clipPath>
<text x="1195" y="181.4" font-size="10.6" textLength="24.6" lengthAdjust="spacingAndGlyphs" fill="#0a0a0a" clip-path="url(#c2)">Title 1</text>
<g transform="translate(441 268)"><path d="M2.200 1H97.800A1.200 1.200 0 0 1 99 2.200V47.800A1.200 1.200 0 0 1 97.800 49H19.500L1 30.500V2.200A1.200 1.200 0 0 1 2.200 1Z" fill="url(#nb)" stroke="url(#sb)" stroke-width="2"/><path d="M0.500 36v13.500h13.500z" fill="url(#nb)"/><path d="M0.700 36.200l13.300 13.300" stroke="#4a7a8c" stroke-width="0.800" fill="none"/><path d="M0.700 35.500v13.800h13.500" stroke="#1c2858" stroke-width="1.400" fill="none"/></g>
<clipPath id="c3"><rect x="443" y="270" width="96" height="46"/></clipPath>
<text x="445" y="281.4" font-size="10.6" textLength="59.5" lengthAdjust="spacingAndGlyphs" fill="#0a0a0a" clip-path="url(#c3)">MovieObject 0</text>
<g transform="translate(891 268)"><path d="M2.200 1H97.800A1.200 1.200 0 0 1 99 2.200V47.800A1.200 1.200 0 0 1 97.800 49H19.500L1 30.500V2.200A1.200 1.200 0 0 1 2.200 1Z" fill="url(#nb)" stroke="url(#sb)" stroke-width="2"/><path d="M0.500 36v13.500h13.500z" fill="url(#nb)"/><path d="M0.700 36.200l13.300 13.300" stroke="#4a7a8c" stroke-width="0.800" fill="none"/><path d="M0.700 35.500v13.800h13.500" stroke="#1c2858" stroke-width="1.400" fill="none"/></g>
<clipPath id="c4"><rect x="893" y="270" width="96" height="46"/></clipPath>
<text x="895" y="281.4" font-size="10.6" textLength="58.3" lengthAdjust="spacingAndGlyphs" fill="#0a0a0a" clip-path="url(#c4)">MovieObject 1</text>
<g transform="translate(1191 268)"><path d="M2.200 1H97.800A1.200 1.200 0 0 1 99 2.200V47.800A1.200 1.200 0 0 1 97.800 49H19.500L1 30.500V2.200A1.200 1.200 0 0 1 2.200 1Z" fill="url(#nb)" stroke="url(#sb)" stroke-width="2"/><path d="M0.500 36v13.500h13.500z" fill="url(#nb)"/><path d="M0.700 36.200l13.300 13.300" stroke="#4a7a8c" stroke-width="0.800" fill="none"/><path d="M0.700 35.500v13.800h13.500" stroke="#1c2858" stroke-width="1.400" fill="none"/></g>
<clipPath id="c5"><rect x="1193" y="270" width="96" height="46"/></clipPath>
<text x="1195" y="281.4" font-size="10.6" textLength="59.1" lengthAdjust="spacingAndGlyphs" fill="#0a0a0a" clip-path="url(#c5)">MovieObject 2</text>
<g transform="translate(441 368)"><path d="M2.200 1H97.800A1.200 1.200 0 0 1 99 2.200V47.800A1.200 1.200 0 0 1 97.800 49H19.500L1 30.500V2.200A1.200 1.200 0 0 1 2.200 1Z" fill="url(#nb)" stroke="url(#sb)" stroke-width="2"/><path d="M0.500 36v13.500h13.500z" fill="url(#nb)"/><path d="M0.700 36.200l13.300 13.300" stroke="#4a7a8c" stroke-width="0.800" fill="none"/><path d="M0.700 35.500v13.800h13.500" stroke="#1c2858" stroke-width="1.400" fill="none"/></g>
<clipPath id="c6"><rect x="443" y="370" width="96" height="46"/></clipPath>
<text x="445" y="381.4" font-size="10.6" textLength="111.2" lengthAdjust="spacingAndGlyphs" fill="#0a0a0a" clip-path="url(#c6)">PlayList 00000 Introduction</text>
<g transform="translate(891 368)"><path d="M2.200 1H97.800A1.200 1.200 0 0 1 99 2.200V47.800A1.200 1.200 0 0 1 97.800 49H19.500L1 30.500V2.200A1.200 1.200 0 0 1 2.200 1Z" fill="url(#nb)" stroke="url(#sb)" stroke-width="2"/><path d="M0.500 36v13.500h13.500z" fill="url(#nb)"/><path d="M0.700 36.200l13.300 13.300" stroke="#4a7a8c" stroke-width="0.800" fill="none"/><path d="M0.700 35.500v13.800h13.500" stroke="#1c2858" stroke-width="1.400" fill="none"/></g>
<clipPath id="c7"><rect x="893" y="370" width="96" height="46"/></clipPath>
<text x="895" y="381.4" font-size="10.6" textLength="103.4" lengthAdjust="spacingAndGlyphs" fill="#0a0a0a" clip-path="url(#c7)">PlayList 00001 Top Menu</text>
<g transform="translate(1191 368)"><path d="M2.200 1H97.800A1.200 1.200 0 0 1 99 2.200V47.800A1.200 1.200 0 0 1 97.800 49H19.500L1 30.500V2.200A1.200 1.200 0 0 1 2.200 1Z" fill="url(#nb)" stroke="url(#sb)" stroke-width="2"/><path d="M0.500 36v13.500h13.500z" fill="url(#nb)"/><path d="M0.700 36.200l13.300 13.300" stroke="#4a7a8c" stroke-width="0.800" fill="none"/><path d="M0.700 35.500v13.800h13.500" stroke="#1c2858" stroke-width="1.400" fill="none"/></g>
<clipPath id="c8"><rect x="1193" y="370" width="96" height="46"/></clipPath>
<text x="1195" y="381.4" font-size="10.6" textLength="86.8" lengthAdjust="spacingAndGlyphs" fill="#0a0a0a" clip-path="url(#c8)">PlayList 00002 Movie</text>
<g transform="translate(441 468)"><path d="M2.200 1H97.800A1.200 1.200 0 0 1 99 2.200V47.800A1.200 1.200 0 0 1 97.800 49H19.500L1 30.500V2.200A1.200 1.200 0 0 1 2.200 1Z" fill="url(#nb)" stroke="url(#sb)" stroke-width="2"/><path d="M0.500 36v13.500h13.500z" fill="url(#nb)"/><path d="M0.700 36.200l13.300 13.300" stroke="#4a7a8c" stroke-width="0.800" fill="none"/><path d="M0.700 35.500v13.800h13.500" stroke="#1c2858" stroke-width="1.400" fill="none"/></g>
<clipPath id="c9"><rect x="443" y="470" width="96" height="46"/></clipPath>
<text x="445" y="481.4" font-size="10.6" textLength="94.4" lengthAdjust="spacingAndGlyphs" fill="#0a0a0a" clip-path="url(#c9)">PlayItem 0 Introduction</text>
<g transform="translate(591 468)"><path d="M2.200 1H97.800A1.200 1.200 0 0 1 99 2.200V47.800A1.200 1.200 0 0 1 97.800 49H19.500L1 30.500V2.200A1.200 1.200 0 0 1 2.200 1Z" fill="url(#nb)" stroke="url(#sb)" stroke-width="2"/><path d="M0.500 36v13.500h13.500z" fill="url(#nb)"/><path d="M0.700 36.200l13.300 13.300" stroke="#4a7a8c" stroke-width="0.800" fill="none"/><path d="M0.700 35.500v13.800h13.500" stroke="#1c2858" stroke-width="1.400" fill="none"/></g>
<clipPath id="c10"><rect x="593" y="470" width="96" height="46"/></clipPath>
<text x="595" y="481.4" font-size="10.6" textLength="88.0" lengthAdjust="spacingAndGlyphs" fill="#0a0a0a" clip-path="url(#c10)">PlayItem 1 DVDLogic</text>
<g transform="translate(741 468)"><path d="M2.200 1H97.800A1.200 1.200 0 0 1 99 2.200V47.800A1.200 1.200 0 0 1 97.800 49H19.500L1 30.500V2.200A1.200 1.200 0 0 1 2.200 1Z" fill="url(#nb)" stroke="url(#sb)" stroke-width="2"/><path d="M0.500 36v13.500h13.500z" fill="url(#nb)"/><path d="M0.700 36.200l13.300 13.300" stroke="#4a7a8c" stroke-width="0.800" fill="none"/><path d="M0.700 35.500v13.800h13.500" stroke="#1c2858" stroke-width="1.400" fill="none"/></g>
<clipPath id="c11"><rect x="743" y="470" width="96" height="46"/></clipPath>
<text x="745" y="481.4" font-size="10.6" textLength="80.1" lengthAdjust="spacingAndGlyphs" fill="#0a0a0a" clip-path="url(#c11)">PlayItem 2 Warning</text>
<g transform="translate(891 468)"><path d="M2.200 1H97.800A1.200 1.200 0 0 1 99 2.200V47.800A1.200 1.200 0 0 1 97.800 49H19.500L1 30.500V2.200A1.200 1.200 0 0 1 2.200 1Z" fill="url(#nb)" stroke="url(#sb)" stroke-width="2"/><path d="M0.500 36v13.500h13.500z" fill="url(#nb)"/><path d="M0.700 36.200l13.300 13.300" stroke="#4a7a8c" stroke-width="0.800" fill="none"/><path d="M0.700 35.500v13.800h13.500" stroke="#1c2858" stroke-width="1.400" fill="none"/></g>
<clipPath id="c12"><rect x="893" y="470" width="96" height="46"/></clipPath>
<text x="895" y="481.4" font-size="10.6" textLength="86.8" lengthAdjust="spacingAndGlyphs" fill="#0a0a0a" clip-path="url(#c12)">PlayItem 0 Top Menu</text>
<g transform="translate(1041 468)"><path d="M2.200 1H97.800A1.200 1.200 0 0 1 99 2.200V47.800A1.200 1.200 0 0 1 97.800 49H19.500L1 30.500V2.200A1.200 1.200 0 0 1 2.200 1Z" fill="url(#nb)" stroke="url(#sb)" stroke-width="2"/><path d="M0.500 36v13.500h13.500z" fill="url(#nb)"/><path d="M0.700 36.200l13.300 13.300" stroke="#4a7a8c" stroke-width="0.800" fill="none"/><path d="M0.700 35.500v13.800h13.500" stroke="#1c2858" stroke-width="1.400" fill="none"/></g>
<clipPath id="c13"><rect x="1043" y="470" width="96" height="46"/></clipPath>
<text x="1045" y="481.4" font-size="10.6" textLength="42.2" lengthAdjust="spacingAndGlyphs" fill="#0a0a0a" clip-path="url(#c13)">SubPath 0</text>
<g transform="translate(1191 468)"><path d="M2.200 1H97.800A1.200 1.200 0 0 1 99 2.200V47.800A1.200 1.200 0 0 1 97.800 49H19.500L1 30.500V2.200A1.200 1.200 0 0 1 2.200 1Z" fill="url(#nb)" stroke="url(#sb)" stroke-width="2"/><path d="M0.500 36v13.500h13.500z" fill="url(#nb)"/><path d="M0.700 36.200l13.300 13.300" stroke="#4a7a8c" stroke-width="0.800" fill="none"/><path d="M0.700 35.500v13.800h13.500" stroke="#1c2858" stroke-width="1.400" fill="none"/></g>
<clipPath id="c14"><rect x="1193" y="470" width="96" height="46"/></clipPath>
<text x="1195" y="481.4" font-size="10.6" textLength="71.1" lengthAdjust="spacingAndGlyphs" fill="#0a0a0a" clip-path="url(#c14)">PlayItem 0 Movie</text>
<g transform="translate(1341 468)"><path d="M2.200 1H97.800A1.200 1.200 0 0 1 99 2.200V47.800A1.200 1.200 0 0 1 97.800 49H19.500L1 30.500V2.200A1.200 1.200 0 0 1 2.200 1Z" fill="url(#nb)" stroke="url(#sb)" stroke-width="2"/><path d="M0.500 36v13.500h13.500z" fill="url(#nb)"/><path d="M0.700 36.200l13.300 13.300" stroke="#4a7a8c" stroke-width="0.800" fill="none"/><path d="M0.700 35.500v13.800h13.500" stroke="#1c2858" stroke-width="1.400" fill="none"/></g>
<clipPath id="c15"><rect x="1343" y="470" width="96" height="46"/></clipPath>
<text x="1345" y="481.4" font-size="10.6" textLength="42.2" lengthAdjust="spacingAndGlyphs" fill="#0a0a0a" clip-path="url(#c15)">SubPath 0</text>
<g transform="translate(1041 568)"><path d="M2.200 1H97.800A1.200 1.200 0 0 1 99 2.200V47.800A1.200 1.200 0 0 1 97.800 49H19.500L1 30.500V2.200A1.200 1.200 0 0 1 2.200 1Z" fill="url(#nb)" stroke="url(#sb)" stroke-width="2"/><path d="M0.500 36v13.500h13.500z" fill="url(#nb)"/><path d="M0.700 36.200l13.300 13.300" stroke="#4a7a8c" stroke-width="0.800" fill="none"/><path d="M0.700 35.500v13.800h13.500" stroke="#1c2858" stroke-width="1.400" fill="none"/></g>
<clipPath id="c16"><rect x="1043" y="570" width="96" height="46"/></clipPath>
<text x="1045" y="581.4" font-size="10.6" textLength="59.8" lengthAdjust="spacingAndGlyphs" fill="#0a0a0a" clip-path="url(#c16)">SubPlayItem 0</text>
<g transform="translate(1341 568)"><path d="M2.200 1H97.800A1.200 1.200 0 0 1 99 2.200V47.800A1.200 1.200 0 0 1 97.800 49H19.500L1 30.500V2.200A1.200 1.200 0 0 1 2.200 1Z" fill="url(#nb)" stroke="url(#sb)" stroke-width="2"/><path d="M0.500 36v13.500h13.500z" fill="url(#nb)"/><path d="M0.700 36.200l13.300 13.300" stroke="#4a7a8c" stroke-width="0.800" fill="none"/><path d="M0.700 35.500v13.800h13.500" stroke="#1c2858" stroke-width="1.400" fill="none"/></g>
<clipPath id="c17"><rect x="1343" y="570" width="96" height="46"/></clipPath>
<text x="1345" y="581.4" font-size="10.6" textLength="59.8" lengthAdjust="spacingAndGlyphs" fill="#0a0a0a" clip-path="url(#c17)">SubPlayItem 0</text>
</svg>
<div style="left:422px;top:750px;width:1176px;height:2px;background:#fdfdfd"></div>
<div style="left:422px;top:752px;width:1177px;height:26px;background:linear-gradient(90deg,#f1f1f7 0,#f6f6fa 25%,#fcfcfe 50%,#fefefe)"></div>
<div style="left:421px;top:752px;width:1177px;height:1px;background:#9a9a9a"></div>
<div style="left:679px;top:750px;width:85px;height:23px;background:#fff;border:1px solid #9a9a9a;border-top:none;border-radius:0 0 5px 5px"></div>
<svg style="left:424px;top:753px" width="16" height="16" viewBox="0 0 18 18"><circle cx="4.500" cy="4.500" r="3" fill="#e88a5a"/><circle cx="10.500" cy="4" r="3.500" fill="#e88a5a"/><rect x="1" y="7.500" width="12" height="8.500" rx="1.500" fill="#e8804a"/><path d="M13 11l4 -3v8.500l-4 -3z" fill="#d06838"/><path d="M3 9l8 6M11 9l-8 6" stroke="#2a4a9a" stroke-width="1.500"/></svg>
<span class="t" style="left:443.2px;top:756px;transform:scaleX(0.8389);color:#5a6784">Clip Editor</span>
<svg style="left:500px;top:753px" width="16" height="16" viewBox="0 0 18 18"><circle cx="8.500" cy="9" r="7.500" fill="#3a2a7a" stroke="#5a8a3a" stroke-width="0.800"/><circle cx="8.500" cy="9" r="1.200" fill="#fff"/><circle cx="8.500" cy="4.500" r="2" fill="#fff"/><circle cx="4.200" cy="7.700" r="2" fill="#fff"/><circle cx="12.800" cy="7.700" r="2" fill="#fff"/><circle cx="5.800" cy="12.700" r="2" fill="#fff"/><circle cx="11.200" cy="12.700" r="2" fill="#fff"/></svg>
<span class="t" style="left:519.4px;top:756px;transform:scaleX(0.8589);color:#5a6784">MovieObjects</span>
<svg style="left:593px;top:753px" width="16" height="16" viewBox="0 0 18 18"><path d="M9 1l6 2.500l-6 2.500l-6 -2.500z" fill="#3a9a3a"/><path d="M9 4.500l6 2.500l-6 2.500l-6 -2.500z" fill="#58b048"/><path d="M9 8l6 2.500l-6 2.500l-6 -2.500z" fill="#3a9a3a"/><path d="M1.500 11c0 4 4 5.500 7.500 5.500s7.500 -1.500 7.500 -5.500" fill="none" stroke="#a84a28" stroke-width="1.600"/><path d="M3 14.500c2 1.500 10 1.500 12 0" fill="none" stroke="#c86a38" stroke-width="1.200"/></svg>
<span class="t" style="left:611.6px;top:756px;transform:scaleX(0.8692);color:#5a6784">Java Objects</span>
<svg style="left:683px;top:753px" width="16" height="16" viewBox="0 0 18 18"><ellipse cx="11" cy="3.500" rx="4" ry="2.500" fill="#a84a28"/><path d="M2 9c3 -4 6 -4 9 -4" fill="none" stroke="#7a3a20" stroke-width="1.600"/><rect x="2" y="10" width="13" height="2" fill="#5a9a48"/><rect x="3.500" y="13" width="13" height="2" fill="#3a7a38"/><rect x="1" y="15.500" width="14" height="2" fill="#5a9a48"/></svg>
<span class="t" style="left:702px;top:756px;transform:scaleX(0.8478)">BD schema</span>
<div class="sep" style="left:495px;top:755px;height:15px;background:#808080"></div>
<div class="sep" style="left:588px;top:755px;height:15px;background:#808080"></div>
<div style="left:421px;top:778px;width:587px;height:1px;background:#9a9a9a"></div>
<div style="left:421px;top:778px;width:1px;height:59px;background:#9a9a9a"></div>
<div style="left:1007px;top:778px;width:1px;height:59px;background:#9a9a9a"></div>
<div class="pt" style="left:422px;top:779px;width:585px"></div>
<span class="t" style="left:427px;top:784px;transform:scaleX(0.8576)">Log</span>
<svg style="left:972px;top:786px" width="8" height="10" viewBox="0 0 8 10" shape-rendering="crispEdges" fill="#000"><rect x="1" y="0" width="5" height="1"/><rect x="1" y="0" width="1" height="5"/><rect x="4" y="0" width="2" height="5"/><rect x="0" y="5" width="7" height="1"/><rect x="3" y="6" width="1" height="3"/></svg>
<svg style="left:991px;top:785px" width="10" height="9" viewBox="0 0 10 9"><path d="M1.2 1l7.6 7M8.8 1l-7.6 7" stroke="#000" stroke-width="2.1" fill="none"/></svg>
<div class="tb" style="left:422px;top:801px;width:585px;height:35px"></div>
<div class="grip" style="left:424px;top:805px;height:22px"></div>
<svg style="left:433px;top:806px" width="26" height="26" viewBox="0 0 26 26"><defs><linearGradient id="cg" x1="0" x2="1"><stop offset="0" stop-color="#2e86c8"/><stop offset="1" stop-color="#1a2a8a"/></linearGradient></defs><path d="M6.500 4h6l2 -2h7l3 3v15.500h-18z" fill="#f8c862" stroke="#e09030" stroke-width="0.900"/><path d="M12 0.700h7l3 3v14h-10z" fill="#fbe6a8" stroke="#dc9a3c" stroke-width="0.900"/><path d="M13.500 4.500h6.500M13.500 7.500h7M13.500 10.500h7M13.500 13.500h7" stroke="#54401e" stroke-width="1.300"/><path d="M1 7h14.500v16.500h-13z" fill="url(#cg)"/><rect x="14" y="19.500" width="9.500" height="3" fill="#1c3aa0"/><path d="M15.500 12.500h3v3.500h-3z" fill="#1a2a8a"/></svg>
<svg style="left:465px;top:806px" width="26" height="26" viewBox="0 0 26 26"><path d="M6 1.500l7.500 14M18 1.500l-7.500 14" stroke="#1a4a88" stroke-width="3" stroke-linecap="round"/><circle cx="7" cy="19.500" r="3" fill="none" stroke="#1a4a88" stroke-width="2"/><circle cx="17" cy="19.500" r="3" fill="none" stroke="#1a4a88" stroke-width="2"/><path d="M9 17l3 -3l3 3" stroke="#1a4a88" stroke-width="2" fill="none"/></svg>
<svg style="left:497px;top:806px" width="26" height="26" viewBox="0 0 26 26"><defs><linearGradient id="a7" x1="0" y1="0" x2="1" y2="0"><stop offset="0" stop-color="#4a0008"/><stop offset="0.450" stop-color="#a00808"/><stop offset="1" stop-color="#e84000"/></linearGradient></defs><circle cx="12" cy="11.700" r="10.800" fill="none" stroke="#b41c1c" stroke-width="1.700" stroke-dasharray="8.500 5.650 44.300 7.500 1.900 0"/><path d="M8.500 5.300L5.300 8.500L9.400 12.200L6.300 15.500L9.500 18.700L12.300 15.500C13.500 18.200 15 20.700 17.400 23C17.300 19.200 16.600 15.700 15.600 12.700C17.600 9.700 20.200 7.700 24 6.400C19.500 5.200 15.500 6.200 12.300 8.900Z" fill="url(#a7)"/></svg>
<svg style="left:529px;top:806px" width="26" height="26" viewBox="0 0 26 26"><path d="M4 2.500h17v19h-13l-4 -3z" fill="#d6d8f0" stroke="#5a5a88" stroke-width="1.200"/><path d="M7 6h11M7 9.500h11M7 13h11M7 16.500h11" stroke="#4a4a78" stroke-width="1.400"/><path d="M3 22l3 -4" stroke="#3a3a88" stroke-width="1.500"/><circle cx="3" cy="22" r="1.300" fill="#3a3a88"/></svg>
<svg style="left:567px;top:806px" width="26" height="26" viewBox="0 0 26 26"><defs><linearGradient id="xg" x1="0" y1="0" x2="1" y2="1"><stop offset="0" stop-color="#ff2a1a"/><stop offset="1" stop-color="#b00808"/></linearGradient></defs><path d="M6 2.500h11l3 3v16.500h-14z" fill="#efe4c2" stroke="#b4a47a" stroke-width="0.900"/><path d="M1.500 17l4.500 6c3 -4 6 -7 9.500 -9.500c1.500 2.500 3.500 5 6 7.500l4 -3.500c-3 -2.500 -5 -5 -6.500 -7.500c2 -2 4 -4 6.500 -5.500l-2.500 -4c-3 2 -5 4 -7 6c-1.500 -2 -2.500 -4 -3.500 -6l-4.500 2c1.500 3 3 5.500 4.500 7.500c-4 3 -7.500 5 -11 7z" fill="url(#xg)"/></svg>
<svg style="left:605px;top:806px" width="26" height="26" viewBox="0 0 26 26"><rect x="2" y="3.500" width="14" height="19" rx="1" fill="#7aaa4a" stroke="#4a7a2a" stroke-width="1"/><rect x="6" y="1" width="6" height="4" rx="1" fill="#4a7a2a"/><rect x="4" y="7" width="10" height="14" fill="#fff"/><path d="M5 9.500h7M5 12.500h7M5 15.500h5M5 18.500h5" stroke="#222" stroke-width="1.400"/><path d="M12.500 13h8l2.500 2.500v8h-10.500z" fill="#6a6ab8" stroke="#3a3a88" stroke-width="0.800"/><rect x="15" y="13.500" width="5" height="3.500" fill="#d8d8f0"/><circle cx="17.500" cy="20.500" r="1.800" fill="#d8d8f0"/></svg>
<div class="sep" style="left:561px;top:806px;height:25px"></div>
<div class="sep" style="left:599px;top:806px;height:25px"></div>
<div class="sep" style="left:637px;top:806px;height:25px"></div>
<div class="sep" style="left:701px;top:806px;height:25px"></div>
<div class="sep" style="left:785px;top:806px;height:25px"></div>
<div class="sep" style="left:880px;top:806px;height:25px"></div>
<div style="left:640px;top:802px;width:58px;height:32px;border:1px solid #3c9cf0"></div>
<svg style="left:643px;top:809px" width="16" height="16" viewBox="0 0 16 16"><circle cx="8" cy="8" r="7" fill="#c83410" stroke="#8a2006" stroke-width="1"/><path d="M4.600 4.300l6.800 7.400M11.400 4.300l-6.800 7.400" stroke="#fff" stroke-width="2.300"/></svg>
<span class="t" style="left:661.5px;top:812px;font-size:11.3px;letter-spacing:0.008px">Errors</span>
<div style="left:704px;top:802px;width:78px;height:32px;border:1px solid #3c9cf0"></div>
<svg style="left:707px;top:809px" width="16" height="16" viewBox="0 0 16 16"><path d="M8 1l7 14h-14z" fill="#f8e838" stroke="#8a7a10" stroke-width="1" stroke-linejoin="round"/><path d="M8 5.500v5" stroke="#000" stroke-width="1.800"/><circle cx="8" cy="12.700" r="1" fill="#000"/></svg>
<span class="t" style="left:725.9px;top:812px;font-size:11.3px;letter-spacing:0.370px">Warnings</span>
<div style="left:788px;top:802px;width:89px;height:32px;border:1px solid #3c9cf0"></div>
<svg style="left:791px;top:809px" width="16" height="16" viewBox="0 0 16 16"><circle cx="8" cy="8" r="7" fill="#209a20" stroke="#0e5e0e" stroke-width="1"/><path d="M4.600 4.300l6.800 7.400M11.400 4.300l-6.800 7.400" stroke="#fff" stroke-width="2.300"/></svg>
<span class="t" style="left:809.9px;top:812px;font-size:11.3px;letter-spacing:0.302px">Corrections</span>
<div style="left:883px;top:802px;width:80px;height:32px;border:1px solid #3c9cf0"></div>
<svg style="left:886px;top:810px" width="17" height="17" viewBox="0 0 17 17"><path d="M6.500 12.800l0.600 3.400l3.600 -3.200z" fill="#cfe0f4" stroke="#8db2dc" stroke-width="0.700"/><ellipse cx="8.500" cy="7.200" rx="7.600" ry="6.500" fill="url(#ig)" stroke="#9fc0e4" stroke-width="0.800"/><path d="M6.900 6h2.600v4.200h1.100v1.100h-4v-1.100h1.200v-3.100h-0.900z" fill="#1c2c80"/><circle cx="8.300" cy="3.800" r="1.250" fill="#1c2c80"/></svg>
<span class="t" style="left:905.9px;top:812px;font-size:11.3px;letter-spacing:-0.015px">Messages</span>
<div class="wh" style="left:421px;top:836px;width:587px;height:163px"></div>
<div style="left:423px;top:981px;width:583px;height:16px;background:#f0f0f0"></div>
<div style="left:440px;top:981px;width:160px;height:15px;background:#cdcdcd"></div>
<svg style="left:428px;top:985px" width="7" height="8" viewBox="0 0 7 8"><path d="M5 0.5l-3.500 3.200l3.500 3.200" stroke="#404040" stroke-width="1.800" fill="none"/></svg>
<svg style="left:994px;top:985px" width="7" height="8" viewBox="0 0 7 8"><path d="M1.500 0.500l3.500 3.200l-3.500 3.200" stroke="#404040" stroke-width="1.800" fill="none"/></svg>
<svg style="left:427px;top:838px" width="17" height="16" viewBox="0 0 17 16"><defs><radialGradient id="ig" cx="0.45" cy="0.4" r="0.65"><stop offset="0" stop-color="#ffffff"/><stop offset="0.55" stop-color="#e2eefa"/><stop offset="1" stop-color="#9cc0e6"/></radialGradient></defs><path d="M6.500 12.300l0.600 3.200l3.400 -3z" fill="#cfe0f4" stroke="#8db2dc" stroke-width="0.700"/><ellipse cx="8.500" cy="6.800" rx="7.600" ry="6.300" fill="url(#ig)" stroke="#9fc0e4" stroke-width="0.800"/><path d="M6.900 5.600h2.600v4.200h1.100v1.100h-4v-1.100h1.200v-3.100h-0.900z" fill="#1c2c80"/><circle cx="8.300" cy="3.400" r="1.250" fill="#1c2c80"/></svg>
<span class="t" style="left:450.5px;top:841px;font-size:12px;letter-spacing:0.116px;font-weight:bold;color:#0000ff">16:35:19 DVDLogic KITe UHD Authoring Suite version 1.4.0.1 was loaded.</span>
<svg style="left:427px;top:855px" width="17" height="16" viewBox="0 0 17 16"><defs><radialGradient id="ig" cx="0.45" cy="0.4" r="0.65"><stop offset="0" stop-color="#ffffff"/><stop offset="0.55" stop-color="#e2eefa"/><stop offset="1" stop-color="#9cc0e6"/></radialGradient></defs><path d="M6.500 12.300l0.600 3.200l3.400 -3z" fill="#cfe0f4" stroke="#8db2dc" stroke-width="0.700"/><ellipse cx="8.500" cy="6.800" rx="7.600" ry="6.300" fill="url(#ig)" stroke="#9fc0e4" stroke-width="0.800"/><path d="M6.900 5.600h2.600v4.200h1.100v1.100h-4v-1.100h1.200v-3.100h-0.900z" fill="#1c2c80"/><circle cx="8.300" cy="3.400" r="1.250" fill="#1c2c80"/></svg>
<span class="t" style="left:449px;top:858px;font-size:11.3px;letter-spacing:-0.239px">16:35:20 Loaded project file: D:\DVDLogic\ProjectBD2.bdProj</span>
<svg style="left:427px;top:872px" width="17" height="16" viewBox="0 0 17 16"><defs><radialGradient id="ig" cx="0.45" cy="0.4" r="0.65"><stop offset="0" stop-color="#ffffff"/><stop offset="0.55" stop-color="#e2eefa"/><stop offset="1" stop-color="#9cc0e6"/></radialGradient></defs><path d="M6.500 12.300l0.600 3.200l3.400 -3z" fill="#cfe0f4" stroke="#8db2dc" stroke-width="0.700"/><ellipse cx="8.500" cy="6.800" rx="7.600" ry="6.300" fill="url(#ig)" stroke="#9fc0e4" stroke-width="0.800"/><path d="M6.900 5.600h2.600v4.200h1.100v1.100h-4v-1.100h1.200v-3.100h-0.900z" fill="#1c2c80"/><circle cx="8.300" cy="3.400" r="1.250" fill="#1c2c80"/></svg>
<span class="t" style="left:449px;top:875px;font-size:11.3px;letter-spacing:-0.221px">16:49:01 Added Video file to project: D:\DVDLogic\DATA\Film50.265</span>
<svg style="left:427px;top:889px" width="17" height="16" viewBox="0 0 17 16"><defs><radialGradient id="ig" cx="0.45" cy="0.4" r="0.65"><stop offset="0" stop-color="#ffffff"/><stop offset="0.55" stop-color="#e2eefa"/><stop offset="1" stop-color="#9cc0e6"/></radialGradient></defs><path d="M6.500 12.300l0.600 3.200l3.400 -3z" fill="#cfe0f4" stroke="#8db2dc" stroke-width="0.700"/><ellipse cx="8.500" cy="6.800" rx="7.600" ry="6.300" fill="url(#ig)" stroke="#9fc0e4" stroke-width="0.800"/><path d="M6.900 5.600h2.600v4.200h1.100v1.100h-4v-1.100h1.200v-3.100h-0.900z" fill="#1c2c80"/><circle cx="8.300" cy="3.400" r="1.250" fill="#1c2c80"/></svg>
<span class="t" style="left:449px;top:892px;font-size:11.3px;letter-spacing:-0.263px">16:49:10 Added Video file to project: D:\DVDLogic\DATA\FilmHDR.265</span>
<div style="left:1012px;top:778px;width:587px;height:1px;background:#9a9a9a"></div>
<div style="left:1012px;top:778px;width:1px;height:59px;background:#9a9a9a"></div>
<div style="left:1598px;top:778px;width:1px;height:59px;background:#9a9a9a"></div>
<div class="pt" style="left:1013px;top:779px;width:585px"></div>
<span class="t" style="left:1018px;top:784px;transform:scaleX(0.8237)">Compilation</span>
<svg style="left:1563px;top:786px" width="8" height="10" viewBox="0 0 8 10" shape-rendering="crispEdges" fill="#000"><rect x="1" y="0" width="5" height="1"/><rect x="1" y="0" width="1" height="5"/><rect x="4" y="0" width="2" height="5"/><rect x="0" y="5" width="7" height="1"/><rect x="3" y="6" width="1" height="3"/></svg>
<svg style="left:1582px;top:785px" width="10" height="9" viewBox="0 0 10 9"><path d="M1.2 1l7.6 7M8.8 1l-7.6 7" stroke="#000" stroke-width="2.1" fill="none"/></svg>
<div class="tb" style="left:1013px;top:801px;width:585px;height:35px"></div>
<div class="grip" style="left:1015px;top:805px;height:22px"></div>
<svg style="left:1024px;top:806px" width="26" height="26" viewBox="0 0 26 26"><defs><linearGradient id="cg" x1="0" x2="1"><stop offset="0" stop-color="#2e86c8"/><stop offset="1" stop-color="#1a2a8a"/></linearGradient></defs><path d="M6.500 4h6l2 -2h7l3 3v15.500h-18z" fill="#f8c862" stroke="#e09030" stroke-width="0.900"/><path d="M12 0.700h7l3 3v14h-10z" fill="#fbe6a8" stroke="#dc9a3c" stroke-width="0.900"/><path d="M13.500 4.500h6.500M13.500 7.500h7M13.500 10.500h7M13.500 13.500h7" stroke="#54401e" stroke-width="1.300"/><path d="M1 7h14.500v16.500h-13z" fill="url(#cg)"/><rect x="14" y="19.500" width="9.500" height="3" fill="#1c3aa0"/><path d="M15.500 12.500h3v3.500h-3z" fill="#1a2a8a"/></svg>
<svg style="left:1056px;top:806px" width="26" height="26" viewBox="0 0 26 26"><path d="M6 1.500l7.500 14M18 1.500l-7.500 14" stroke="#1a4a88" stroke-width="3" stroke-linecap="round"/><circle cx="7" cy="19.500" r="3" fill="none" stroke="#1a4a88" stroke-width="2"/><circle cx="17" cy="19.500" r="3" fill="none" stroke="#1a4a88" stroke-width="2"/><path d="M9 17l3 -3l3 3" stroke="#1a4a88" stroke-width="2" fill="none"/></svg>
<svg style="left:1088px;top:806px" width="26" height="26" viewBox="0 0 26 26"><defs><linearGradient id="a7" x1="0" y1="0" x2="1" y2="0"><stop offset="0" stop-color="#4a0008"/><stop offset="0.450" stop-color="#a00808"/><stop offset="1" stop-color="#e84000"/></linearGradient></defs><circle cx="12" cy="11.700" r="10.800" fill="none" stroke="#b41c1c" stroke-width="1.700" stroke-dasharray="8.500 5.650 44.300 7.500 1.900 0"/><path d="M8.500 5.300L5.300 8.500L9.400 12.200L6.300 15.500L9.500 18.700L12.300 15.500C13.500 18.200 15 20.700 17.400 23C17.300 19.200 16.600 15.700 15.600 12.700C17.600 9.700 20.200 7.700 24 6.400C19.500 5.200 15.500 6.200 12.300 8.900Z" fill="url(#a7)"/></svg>
<svg style="left:1120px;top:806px" width="26" height="26" viewBox="0 0 26 26"><path d="M4 2.500h17v19h-13l-4 -3z" fill="#d6d8f0" stroke="#5a5a88" stroke-width="1.200"/><path d="M7 6h11M7 9.500h11M7 13h11M7 16.500h11" stroke="#4a4a78" stroke-width="1.400"/><path d="M3 22l3 -4" stroke="#3a3a88" stroke-width="1.500"/><circle cx="3" cy="22" r="1.300" fill="#3a3a88"/></svg>
<svg style="left:1158px;top:806px" width="26" height="26" viewBox="0 0 26 26"><defs><linearGradient id="xg" x1="0" y1="0" x2="1" y2="1"><stop offset="0" stop-color="#ff2a1a"/><stop offset="1" stop-color="#b00808"/></linearGradient></defs><path d="M6 2.500h11l3 3v16.500h-14z" fill="#efe4c2" stroke="#b4a47a" stroke-width="0.900"/><path d="M1.500 17l4.500 6c3 -4 6 -7 9.500 -9.500c1.500 2.500 3.500 5 6 7.500l4 -3.500c-3 -2.500 -5 -5 -6.500 -7.500c2 -2 4 -4 6.500 -5.500l-2.500 -4c-3 2 -5 4 -7 6c-1.500 -2 -2.500 -4 -3.500 -6l-4.500 2c1.500 3 3 5.500 4.500 7.500c-4 3 -7.500 5 -11 7z" fill="url(#xg)"/></svg>
<svg style="left:1196px;top:806px" width="26" height="26" viewBox="0 0 26 26"><rect x="2" y="3.500" width="14" height="19" rx="1" fill="#7aaa4a" stroke="#4a7a2a" stroke-width="1"/><rect x="6" y="1" width="6" height="4" rx="1" fill="#4a7a2a"/><rect x="4" y="7" width="10" height="14" fill="#fff"/><path d="M5 9.500h7M5 12.500h7M5 15.500h5M5 18.500h5" stroke="#222" stroke-width="1.400"/><path d="M12.500 13h8l2.500 2.500v8h-10.500z" fill="#6a6ab8" stroke="#3a3a88" stroke-width="0.800"/><rect x="15" y="13.500" width="5" height="3.500" fill="#d8d8f0"/><circle cx="17.500" cy="20.500" r="1.800" fill="#d8d8f0"/></svg>
<div class="sep" style="left:1152px;top:806px;height:25px"></div>
<div class="sep" style="left:1190px;top:806px;height:25px"></div>
<div class="sep" style="left:1228px;top:806px;height:25px"></div>
<div class="sep" style="left:1292px;top:806px;height:25px"></div>
<div class="sep" style="left:1376px;top:806px;height:25px"></div>
<div class="sep" style="left:1471px;top:806px;height:25px"></div>
<div style="left:1231px;top:802px;width:58px;height:32px;border:1px solid #3c9cf0"></div>
<svg style="left:1234px;top:809px" width="16" height="16" viewBox="0 0 16 16"><circle cx="8" cy="8" r="7" fill="#c83410" stroke="#8a2006" stroke-width="1"/><path d="M4.600 4.300l6.800 7.400M11.400 4.300l-6.800 7.400" stroke="#fff" stroke-width="2.300"/></svg>
<span class="t" style="left:1252.5px;top:812px;font-size:11.3px;letter-spacing:0.008px">Errors</span>
<div style="left:1295px;top:802px;width:78px;height:32px;border:1px solid #3c9cf0"></div>
<svg style="left:1298px;top:809px" width="16" height="16" viewBox="0 0 16 16"><path d="M8 1l7 14h-14z" fill="#f8e838" stroke="#8a7a10" stroke-width="1" stroke-linejoin="round"/><path d="M8 5.500v5" stroke="#000" stroke-width="1.800"/><circle cx="8" cy="12.700" r="1" fill="#000"/></svg>
<span class="t" style="left:1316.8999999999999px;top:812px;font-size:11.3px;letter-spacing:0.370px">Warnings</span>
<div style="left:1379px;top:802px;width:89px;height:32px;border:1px solid #3c9cf0"></div>
<svg style="left:1382px;top:809px" width="16" height="16" viewBox="0 0 16 16"><circle cx="8" cy="8" r="7" fill="#209a20" stroke="#0e5e0e" stroke-width="1"/><path d="M4.600 4.300l6.800 7.400M11.400 4.300l-6.800 7.400" stroke="#fff" stroke-width="2.300"/></svg>
<span class="t" style="left:1400.8999999999999px;top:812px;font-size:11.3px;letter-spacing:0.302px">Corrections</span>
<div style="left:1474px;top:802px;width:80px;height:32px;border:1px solid #3c9cf0"></div>
<svg style="left:1477px;top:810px" width="17" height="17" viewBox="0 0 17 17"><path d="M6.500 12.800l0.600 3.400l3.600 -3.200z" fill="#cfe0f4" stroke="#8db2dc" stroke-width="0.700"/><ellipse cx="8.500" cy="7.200" rx="7.600" ry="6.500" fill="url(#ig)" stroke="#9fc0e4" stroke-width="0.800"/><path d="M6.900 6h2.600v4.200h1.100v1.100h-4v-1.100h1.200v-3.100h-0.900z" fill="#1c2c80"/><circle cx="8.300" cy="3.800" r="1.250" fill="#1c2c80"/></svg>
<span class="t" style="left:1496.8999999999999px;top:812px;font-size:11.3px;letter-spacing:-0.015px">Messages</span>
<div class="wh" style="left:1012px;top:836px;width:587px;height:163px"></div>
<div style="left:1014px;top:981px;width:583px;height:16px;background:#f0f0f0"></div>
<div style="left:1031px;top:981px;width:160px;height:15px;background:#cdcdcd"></div>
<svg style="left:1019px;top:985px" width="7" height="8" viewBox="0 0 7 8"><path d="M5 0.5l-3.500 3.200l3.500 3.200" stroke="#404040" stroke-width="1.800" fill="none"/></svg>
<svg style="left:1585px;top:985px" width="7" height="8" viewBox="0 0 7 8"><path d="M1.500 0.500l3.500 3.200l-3.500 3.200" stroke="#404040" stroke-width="1.800" fill="none"/></svg>
</body></html>
